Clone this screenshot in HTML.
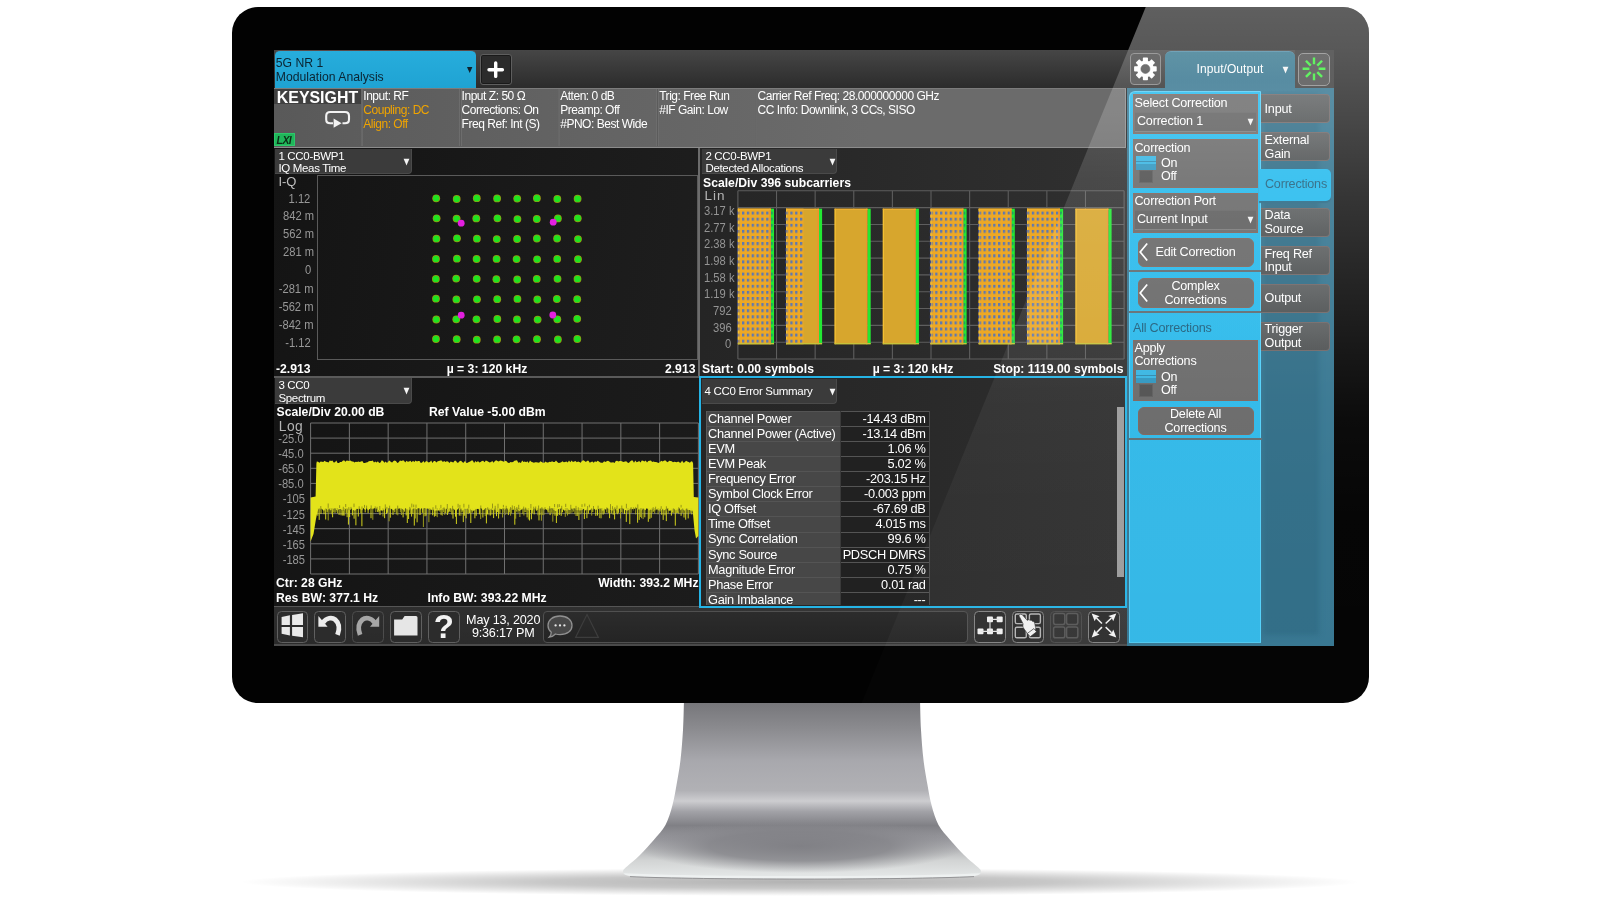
<!DOCTYPE html>
<html lang="en"><head><meta charset="utf-8"><title>5G NR Modulation Analysis</title>
<style>
html,body{margin:0;padding:0;background:#fff;}
body{width:1600px;height:900px;overflow:hidden;position:relative;font-family:"Liberation Sans",sans-serif;}
#scr{position:absolute;left:0;top:0;width:1600px;height:900px;clip-path:inset(50px 266px 254px 274px);background:#1b1b1b;filter:blur(0.4px);}
#scr div, #scr svg{position:absolute;box-sizing:border-box;}
.t{white-space:nowrap;letter-spacing:-0.35px;}
.btn{border:1px solid #5e5e5e;border-radius:3px;background:#2b2b2b;box-shadow:inset 0 0 0 1px #1a1a1a;}
.dd{background:#3b3b3b;border-radius:0 0 4px 0;border-bottom:1px solid #4a4a4a;border-right:1px solid #4a4a4a;}
.mbox{background:#676767;border:1px solid #7d6259;}
.mbtn{background:#666;border:1px solid #7d6259;border-radius:6px;}
.rtab{background:linear-gradient(180deg,#5c5f60,#4d5051);border:1px solid #6f6666;border-left:none;border-radius:0 4px 4px 0;}
</style></head><body>

<svg width="1600" height="900" viewBox="0 0 1600 900" style="position:absolute;left:0;top:0">
<defs>
<linearGradient id="sg" x1="0" y1="703" x2="0" y2="878" gradientUnits="userSpaceOnUse">
<stop offset="0" stop-color="#77777b"/><stop offset="0.14" stop-color="#8a8a8e"/>
<stop offset="0.33" stop-color="#a8a8ad"/><stop offset="0.50" stop-color="#b1b1b5"/>
<stop offset="0.56" stop-color="#cdcdd0"/><stop offset="0.62" stop-color="#a2a2a7"/>
<stop offset="0.70" stop-color="#808085"/><stop offset="0.78" stop-color="#9a9a9f"/>
<stop offset="0.90" stop-color="#d2d4d4"/><stop offset="1" stop-color="#e6e9e9"/>
</linearGradient>
<radialGradient id="blob" cx="800" cy="846" r="1" gradientUnits="userSpaceOnUse" gradientTransform="translate(800 846) scale(165 27) translate(-800 -846)">
<stop offset="0" stop-color="#7e7e83" stop-opacity="0.95"/><stop offset="0.55" stop-color="#828287" stop-opacity="0.8"/><stop offset="1" stop-color="#8a8a8f" stop-opacity="0"/></radialGradient>
<radialGradient id="shd" cx="800" cy="882" r="1" gradientUnits="userSpaceOnUse" gradientTransform="translate(800 882) scale(560 14) translate(-800 -882)">
<stop offset="0" stop-color="#000" stop-opacity="0.30"/><stop offset="0.45" stop-color="#000" stop-opacity="0.22"/><stop offset="0.8" stop-color="#000" stop-opacity="0.08"/><stop offset="1" stop-color="#000" stop-opacity="0"/></radialGradient>
<clipPath id="stc"><path d="M684.0 700.0 C683.8 705.0 683.6 720.0 683.0 730.0 C682.4 740.0 681.6 750.8 680.5 760.0 C679.4 769.2 677.8 777.5 676.5 785.0 C675.2 792.5 674.3 798.3 672.5 805.0 C670.7 811.7 668.6 819.2 665.5 825.0 C662.4 830.8 658.0 835.0 653.8 840.0 C649.5 845.0 644.4 850.7 640.0 855.0 C635.6 859.3 630.3 863.4 627.5 866.0 C624.7 868.6 623.7 869.1 623.2 870.5 C622.7 871.9 623.2 873.2 624.5 874.2 C625.8 875.2 629.9 875.9 631.0 876.2 C700 879.5 904 879.5 973.0 876.2 C974.1 875.9 978.2 875.2 979.5 874.2 C980.8 873.2 981.3 871.9 980.8 870.5 C980.3 869.1 979.3 868.6 976.5 866.0 C973.7 863.4 968.4 859.3 964.0 855.0 C959.6 850.7 954.5 845.0 950.2 840.0 C946.0 835.0 941.6 830.8 938.5 825.0 C935.4 819.2 933.3 811.7 931.5 805.0 C929.7 798.3 928.8 792.5 927.5 785.0 C926.2 777.5 924.6 769.2 923.5 760.0 C922.4 750.8 921.6 740.0 921.0 730.0 C920.4 720.0 920.2 705.0 920.0 700.0 Z"/></clipPath>
</defs>
<ellipse cx="800" cy="882" rx="560" ry="14" fill="url(#shd)"/>
<g clip-path="url(#stc)">
<rect x="600" y="700" width="400" height="180" fill="url(#sg)"/>
<rect x="600" y="810" width="400" height="70" fill="url(#blob)"/>
<path d="M622 873.2 C700 877 904 877 982 873.2 L982 880 L622 880 Z" fill="#eef1f1"/>
</g>
<path d="M630 876.6 C700 879.9 904 879.9 974 876.6" stroke="#8d8d90" stroke-width="0.9" fill="none"/>
</svg>

<div style="position:absolute;left:232px;top:7px;width:1137px;height:696px;border-radius:26px;background:#020202;"></div>
<div id="scr">
<div style="left:274.0px;top:50.0px;width:1060.0px;height:38.0px;background:linear-gradient(180deg,#464646 0%,#3a3a3a 45%,#2c2c2c 100%);"></div>
<div style="left:274.5px;top:50.4px;width:201.5px;height:37.6px;background:linear-gradient(180deg,#27addc,#1fa3d3);border-radius:5px 5px 0 0;border-top:1px solid #5a4a48;"></div>
<div class="t" style="top:56.3px;font-size:12.2px;line-height:14.2px;color:#0b2533;letter-spacing:0.01px;left:275.8px;">5G NR 1</div>
<div class="t" style="top:69.5px;font-size:12.2px;line-height:14.2px;color:#0b2533;letter-spacing:0.01px;left:275.8px;">Modulation Analysis</div>
<svg style="left:466px;top:66px" width="8" height="8" viewBox="0 0 8 8"><path d="M1 1 L6.4 1 L3.7 7 Z" fill="#10222c"/></svg>
<div class="btn" style="left:480.0px;top:54.0px;width:31.5px;height:31.0px;"><svg style="left:0;top:0" width="30" height="29" viewBox="0 0 30 29"><path d="M14.7 8 V21.4 M8 14.7 H21.4" stroke="#fff" stroke-width="3.4" stroke-linecap="round" fill="none"/></svg></div>
<div style="left:274.0px;top:88.0px;width:852.0px;height:59.6px;background:linear-gradient(90deg,#595959,#5e5e5e 15%,#6b6b6b 70%);border-top:1.2px solid #7c7c7c;border-bottom:1.6px solid #8c8c8c;border-right:1.2px solid #8c8c8c;"></div>
<div style="left:360.5px;top:89.2px;width:2.5px;height:56.6px;background:linear-gradient(90deg,#787878,#595959 45%,#767676);"></div>
<div style="left:459.0px;top:89.2px;width:2.5px;height:56.6px;background:linear-gradient(90deg,#787878,#595959 45%,#767676);"></div>
<div style="left:557.5px;top:89.2px;width:2.5px;height:56.6px;background:linear-gradient(90deg,#787878,#595959 45%,#767676);"></div>
<div style="left:656.0px;top:89.2px;width:2.5px;height:56.6px;background:linear-gradient(90deg,#787878,#595959 45%,#767676);"></div>
<div style="left:754.5px;top:89.2px;width:2.5px;height:56.6px;background:linear-gradient(90deg,#787878,#595959 45%,#767676);"></div>
<div style="left:274.0px;top:89.2px;width:87.0px;height:14.8px;background:#404040;"></div>
<div class="t" style="top:88.6px;font-size:15.9px;line-height:17.9px;color:#fff;font-weight:bold;letter-spacing:0.01px;left:276.8px;">KEYSIGHT</div>
<svg style="left:322px;top:108px" width="32" height="22" viewBox="0 0 32 22">
<path d="M11 15.2 H8.2 C5.6 15.2 4.2 13.8 4.2 11.4 V8 C4.2 5.4 5.6 4 8.2 4 H23 C25.6 4 27 5.4 27 8 V11.4 C27 13.8 25.6 15.2 23 15.2 H20.5" stroke="#f2f2f2" stroke-width="2.1" fill="none"/>
<path d="M11.6 10.6 L19.6 15.2 L11.6 19.8 Z" fill="#f2f2f2"/></svg>
<div style="left:274.4px;top:133.2px;width:20.6px;height:12.8px;background:#20b65a;border:1px solid #2cc86a;"></div>
<div class="t" style="top:133.6px;font-size:10.5px;line-height:12.5px;color:#0b2d16;font-weight:bold;left:276.6px;font-style:italic;letter-spacing:-0.6px;">LXI</div>
<div class="t" style="top:89.0px;font-size:12px;line-height:14px;color:#fff;letter-spacing:-0.47px;left:363.3px;">Input: RF</div>
<div class="t" style="top:103.0px;font-size:12px;line-height:14px;color:#f0a400;letter-spacing:-0.47px;left:363.3px;">Coupling: DC</div>
<div class="t" style="top:116.5px;font-size:12px;line-height:14px;color:#f0a400;letter-spacing:-0.47px;left:363.3px;">Align: Off</div>
<div class="t" style="top:89.0px;font-size:12px;line-height:14px;color:#fff;letter-spacing:-0.47px;left:461.6px;">Input Z: 50 Ω</div>
<div class="t" style="top:103.0px;font-size:12px;line-height:14px;color:#fff;letter-spacing:-0.47px;left:461.6px;">Corrections: On</div>
<div class="t" style="top:116.5px;font-size:12px;line-height:14px;color:#fff;letter-spacing:-0.47px;left:461.6px;">Freq Ref: Int (S)</div>
<div class="t" style="top:89.0px;font-size:12px;line-height:14px;color:#fff;letter-spacing:-0.47px;left:560.2px;">Atten: 0 dB</div>
<div class="t" style="top:103.0px;font-size:12px;line-height:14px;color:#fff;letter-spacing:-0.47px;left:560.2px;">Preamp: Off</div>
<div class="t" style="top:116.5px;font-size:12px;line-height:14px;color:#fff;letter-spacing:-0.47px;left:560.2px;">#PNO: Best Wide</div>
<div class="t" style="top:89.0px;font-size:12px;line-height:14px;color:#fff;letter-spacing:-0.47px;left:659.2px;">Trig: Free Run</div>
<div class="t" style="top:103.0px;font-size:12px;line-height:14px;color:#fff;letter-spacing:-0.47px;left:659.2px;">#IF Gain: Low</div>
<div class="t" style="top:89.0px;font-size:12px;line-height:14px;color:#fff;letter-spacing:-0.47px;left:757.6px;">Carrier Ref Freq: 28.000000000 GHz</div>
<div class="t" style="top:103.0px;font-size:12px;line-height:14px;color:#fff;letter-spacing:-0.47px;left:757.6px;">CC Info: Downlink, 3 CCs, SISO</div>
<div style="left:274.0px;top:147.6px;width:425.0px;height:229.4px;background:linear-gradient(100deg,#141414,#1e1e1e);"></div>
<div style="left:700.0px;top:147.6px;width:427.0px;height:229.4px;background:linear-gradient(90deg,#252525,#303030);"></div>
<div style="left:274.0px;top:378.0px;width:425.0px;height:229.0px;background:linear-gradient(100deg,#141414,#1c1c1c);"></div>
<div style="left:697.8px;top:147.6px;width:2.4px;height:229.0px;background:#6c6c6c;"></div>
<div style="left:274.0px;top:376.0px;width:425.0px;height:2.3px;background:#5a5a5a;"></div>
<div class="dd" style="left:275.0px;top:148.5px;width:136.5px;height:25.5px;"></div>
<div class="t" style="top:149.7px;font-size:11.5px;line-height:13.5px;color:#fff;letter-spacing:-0.32px;left:278.4px;">1 CC0-BWP1</div>
<div class="t" style="top:162.1px;font-size:11.5px;line-height:13.5px;color:#fff;letter-spacing:-0.32px;left:278.4px;">IQ Meas Time</div>
<svg style="left:403.0px;top:157.5px" width="8" height="8" viewBox="0 0 8 8"><path d="M0.6 0.8 L6.4 0.8 L3.5 7.4 Z" fill="#f4f4f4"/></svg>
<div class="t" style="top:173.9px;font-size:13px;line-height:15px;color:#c0c0c0;letter-spacing:-0.1px;left:278.4px;">I-Q</div>
<div style="left:316.8px;top:175.4px;width:381.3px;height:184.8px;border:1.2px solid #5a5a5a;"></div>
<div class="t" style="top:190.6px;font-size:13px;line-height:15px;color:#989898;letter-spacing:0.01px;right:1289.8px;text-align:right;transform:scaleX(0.86);transform-origin:right center;">1.12</div>
<div class="t" style="top:208.0px;font-size:13px;line-height:15px;color:#989898;letter-spacing:0.01px;right:1286.0px;text-align:right;transform:scaleX(0.86);transform-origin:right center;">842 m</div>
<div class="t" style="top:226.1px;font-size:13px;line-height:15px;color:#989898;letter-spacing:0.01px;right:1286.0px;text-align:right;transform:scaleX(0.86);transform-origin:right center;">562 m</div>
<div class="t" style="top:243.8px;font-size:13px;line-height:15px;color:#989898;letter-spacing:0.01px;right:1286.0px;text-align:right;transform:scaleX(0.86);transform-origin:right center;">281 m</div>
<div class="t" style="top:262.4px;font-size:13px;line-height:15px;color:#989898;letter-spacing:0.01px;right:1289.0px;text-align:right;transform:scaleX(0.86);transform-origin:right center;">0</div>
<div class="t" style="top:281.0px;font-size:13px;line-height:15px;color:#989898;letter-spacing:0.01px;right:1286.0px;text-align:right;transform:scaleX(0.86);transform-origin:right center;">-281 m</div>
<div class="t" style="top:298.9px;font-size:13px;line-height:15px;color:#989898;letter-spacing:0.01px;right:1286.0px;text-align:right;transform:scaleX(0.86);transform-origin:right center;">-562 m</div>
<div class="t" style="top:316.5px;font-size:13px;line-height:15px;color:#989898;letter-spacing:0.01px;right:1286.0px;text-align:right;transform:scaleX(0.86);transform-origin:right center;">-842 m</div>
<div class="t" style="top:335.0px;font-size:13px;line-height:15px;color:#989898;letter-spacing:0.01px;right:1289.8px;text-align:right;transform:scaleX(0.86);transform-origin:right center;">-1.12</div>
<svg style="left:0;top:0" width="1600" height="900" viewBox="0 0 1600 900"><circle cx="436.2" cy="198.3" r="3.9" fill="#9c9412"/><circle cx="436.2" cy="198.3" r="3.2" fill="#20e420"/><circle cx="436.6" cy="218.3" r="3.9" fill="#9c9412"/><circle cx="436.6" cy="218.3" r="3.2" fill="#20e420"/><circle cx="436.4" cy="238.7" r="3.9" fill="#9c9412"/><circle cx="436.4" cy="238.7" r="3.2" fill="#20e420"/><circle cx="436.0" cy="258.9" r="3.9" fill="#9c9412"/><circle cx="436.0" cy="258.9" r="3.2" fill="#20e420"/><circle cx="435.9" cy="278.9" r="3.9" fill="#9c9412"/><circle cx="435.9" cy="278.9" r="3.2" fill="#20e420"/><circle cx="436.0" cy="298.7" r="3.9" fill="#9c9412"/><circle cx="436.0" cy="298.7" r="3.2" fill="#20e420"/><circle cx="436.3" cy="319.5" r="3.9" fill="#9c9412"/><circle cx="436.3" cy="319.5" r="3.2" fill="#20e420"/><circle cx="436.0" cy="339.0" r="3.9" fill="#9c9412"/><circle cx="436.0" cy="339.0" r="3.2" fill="#20e420"/><circle cx="456.7" cy="199.0" r="3.9" fill="#9c9412"/><circle cx="456.7" cy="199.0" r="3.2" fill="#20e420"/><circle cx="456.6" cy="218.6" r="3.9" fill="#9c9412"/><circle cx="456.6" cy="218.6" r="3.2" fill="#20e420"/><circle cx="457.0" cy="238.3" r="3.9" fill="#9c9412"/><circle cx="457.0" cy="238.3" r="3.2" fill="#20e420"/><circle cx="456.9" cy="258.7" r="3.9" fill="#9c9412"/><circle cx="456.9" cy="258.7" r="3.2" fill="#20e420"/><circle cx="456.2" cy="278.6" r="3.9" fill="#9c9412"/><circle cx="456.2" cy="278.6" r="3.2" fill="#20e420"/><circle cx="456.4" cy="299.4" r="3.9" fill="#9c9412"/><circle cx="456.4" cy="299.4" r="3.2" fill="#20e420"/><circle cx="456.3" cy="319.3" r="3.9" fill="#9c9412"/><circle cx="456.3" cy="319.3" r="3.2" fill="#20e420"/><circle cx="456.7" cy="339.2" r="3.9" fill="#9c9412"/><circle cx="456.7" cy="339.2" r="3.2" fill="#20e420"/><circle cx="476.8" cy="198.2" r="3.9" fill="#9c9412"/><circle cx="476.8" cy="198.2" r="3.2" fill="#20e420"/><circle cx="476.3" cy="218.4" r="3.9" fill="#9c9412"/><circle cx="476.3" cy="218.4" r="3.2" fill="#20e420"/><circle cx="476.9" cy="238.7" r="3.9" fill="#9c9412"/><circle cx="476.9" cy="238.7" r="3.2" fill="#20e420"/><circle cx="476.6" cy="259.0" r="3.9" fill="#9c9412"/><circle cx="476.6" cy="259.0" r="3.2" fill="#20e420"/><circle cx="476.7" cy="278.8" r="3.9" fill="#9c9412"/><circle cx="476.7" cy="278.8" r="3.2" fill="#20e420"/><circle cx="477.0" cy="299.3" r="3.9" fill="#9c9412"/><circle cx="477.0" cy="299.3" r="3.2" fill="#20e420"/><circle cx="476.5" cy="319.3" r="3.9" fill="#9c9412"/><circle cx="476.5" cy="319.3" r="3.2" fill="#20e420"/><circle cx="476.8" cy="339.7" r="3.9" fill="#9c9412"/><circle cx="476.8" cy="339.7" r="3.2" fill="#20e420"/><circle cx="497.1" cy="198.4" r="3.9" fill="#9c9412"/><circle cx="497.1" cy="198.4" r="3.2" fill="#20e420"/><circle cx="497.4" cy="218.3" r="3.9" fill="#9c9412"/><circle cx="497.4" cy="218.3" r="3.2" fill="#20e420"/><circle cx="496.8" cy="239.1" r="3.9" fill="#9c9412"/><circle cx="496.8" cy="239.1" r="3.2" fill="#20e420"/><circle cx="496.6" cy="258.9" r="3.9" fill="#9c9412"/><circle cx="496.6" cy="258.9" r="3.2" fill="#20e420"/><circle cx="496.4" cy="279.2" r="3.9" fill="#9c9412"/><circle cx="496.4" cy="279.2" r="3.2" fill="#20e420"/><circle cx="497.2" cy="299.2" r="3.9" fill="#9c9412"/><circle cx="497.2" cy="299.2" r="3.2" fill="#20e420"/><circle cx="497.3" cy="319.0" r="3.9" fill="#9c9412"/><circle cx="497.3" cy="319.0" r="3.2" fill="#20e420"/><circle cx="497.1" cy="339.4" r="3.9" fill="#9c9412"/><circle cx="497.1" cy="339.4" r="3.2" fill="#20e420"/><circle cx="517.2" cy="198.6" r="3.9" fill="#9c9412"/><circle cx="517.2" cy="198.6" r="3.2" fill="#20e420"/><circle cx="517.4" cy="219.1" r="3.9" fill="#9c9412"/><circle cx="517.4" cy="219.1" r="3.2" fill="#20e420"/><circle cx="517.1" cy="239.0" r="3.9" fill="#9c9412"/><circle cx="517.1" cy="239.0" r="3.2" fill="#20e420"/><circle cx="516.6" cy="259.1" r="3.9" fill="#9c9412"/><circle cx="516.6" cy="259.1" r="3.2" fill="#20e420"/><circle cx="517.2" cy="279.5" r="3.9" fill="#9c9412"/><circle cx="517.2" cy="279.5" r="3.2" fill="#20e420"/><circle cx="517.4" cy="298.9" r="3.9" fill="#9c9412"/><circle cx="517.4" cy="298.9" r="3.2" fill="#20e420"/><circle cx="517.0" cy="319.4" r="3.9" fill="#9c9412"/><circle cx="517.0" cy="319.4" r="3.2" fill="#20e420"/><circle cx="516.6" cy="339.3" r="3.9" fill="#9c9412"/><circle cx="516.6" cy="339.3" r="3.2" fill="#20e420"/><circle cx="536.9" cy="198.2" r="3.9" fill="#9c9412"/><circle cx="536.9" cy="198.2" r="3.2" fill="#20e420"/><circle cx="536.8" cy="219.0" r="3.9" fill="#9c9412"/><circle cx="536.8" cy="219.0" r="3.2" fill="#20e420"/><circle cx="536.9" cy="238.5" r="3.9" fill="#9c9412"/><circle cx="536.9" cy="238.5" r="3.2" fill="#20e420"/><circle cx="537.1" cy="259.3" r="3.9" fill="#9c9412"/><circle cx="537.1" cy="259.3" r="3.2" fill="#20e420"/><circle cx="536.8" cy="278.9" r="3.9" fill="#9c9412"/><circle cx="536.8" cy="278.9" r="3.2" fill="#20e420"/><circle cx="537.3" cy="299.5" r="3.9" fill="#9c9412"/><circle cx="537.3" cy="299.5" r="3.2" fill="#20e420"/><circle cx="537.6" cy="319.6" r="3.9" fill="#9c9412"/><circle cx="537.6" cy="319.6" r="3.2" fill="#20e420"/><circle cx="537.0" cy="339.2" r="3.9" fill="#9c9412"/><circle cx="537.0" cy="339.2" r="3.2" fill="#20e420"/><circle cx="557.3" cy="199.0" r="3.9" fill="#9c9412"/><circle cx="557.3" cy="199.0" r="3.2" fill="#20e420"/><circle cx="557.9" cy="218.4" r="3.9" fill="#9c9412"/><circle cx="557.9" cy="218.4" r="3.2" fill="#20e420"/><circle cx="557.1" cy="238.5" r="3.9" fill="#9c9412"/><circle cx="557.1" cy="238.5" r="3.2" fill="#20e420"/><circle cx="557.2" cy="258.9" r="3.9" fill="#9c9412"/><circle cx="557.2" cy="258.9" r="3.2" fill="#20e420"/><circle cx="557.5" cy="278.8" r="3.9" fill="#9c9412"/><circle cx="557.5" cy="278.8" r="3.2" fill="#20e420"/><circle cx="556.9" cy="299.0" r="3.9" fill="#9c9412"/><circle cx="556.9" cy="299.0" r="3.2" fill="#20e420"/><circle cx="557.3" cy="319.3" r="3.9" fill="#9c9412"/><circle cx="557.3" cy="319.3" r="3.2" fill="#20e420"/><circle cx="557.9" cy="339.5" r="3.9" fill="#9c9412"/><circle cx="557.9" cy="339.5" r="3.2" fill="#20e420"/><circle cx="577.6" cy="198.7" r="3.9" fill="#9c9412"/><circle cx="577.6" cy="198.7" r="3.2" fill="#20e420"/><circle cx="577.8" cy="218.3" r="3.9" fill="#9c9412"/><circle cx="577.8" cy="218.3" r="3.2" fill="#20e420"/><circle cx="578.0" cy="239.1" r="3.9" fill="#9c9412"/><circle cx="578.0" cy="239.1" r="3.2" fill="#20e420"/><circle cx="578.0" cy="259.2" r="3.9" fill="#9c9412"/><circle cx="578.0" cy="259.2" r="3.2" fill="#20e420"/><circle cx="577.5" cy="278.9" r="3.9" fill="#9c9412"/><circle cx="577.5" cy="278.9" r="3.2" fill="#20e420"/><circle cx="577.2" cy="299.2" r="3.9" fill="#9c9412"/><circle cx="577.2" cy="299.2" r="3.2" fill="#20e420"/><circle cx="577.2" cy="318.8" r="3.9" fill="#9c9412"/><circle cx="577.2" cy="318.8" r="3.2" fill="#20e420"/><circle cx="577.3" cy="339.0" r="3.9" fill="#9c9412"/><circle cx="577.3" cy="339.0" r="3.2" fill="#20e420"/><circle cx="461.2" cy="223.2" r="3.4" fill="#e31fe0"/><circle cx="553.2" cy="222.2" r="3.4" fill="#e31fe0"/><circle cx="461.2" cy="315.2" r="3.4" fill="#e31fe0"/><circle cx="552.8" cy="315" r="3.4" fill="#e31fe0"/></svg>
<div class="t" style="top:361.9px;font-size:12.2px;line-height:14.2px;color:#fff;font-weight:bold;letter-spacing:0.01px;left:276.0px;">-2.913</div>
<div class="t" style="top:361.9px;font-size:12.2px;line-height:14.2px;color:#fff;font-weight:bold;letter-spacing:0.01px;left:287.0px;width:400px;text-align:center;">µ = 3: 120 kHz</div>
<div class="t" style="top:361.9px;font-size:12.2px;line-height:14.2px;color:#fff;font-weight:bold;letter-spacing:0.01px;right:904.5px;text-align:right;">2.913</div>
<div class="dd" style="left:702.0px;top:148.5px;width:134.5px;height:25.5px;"></div>
<div class="t" style="top:149.7px;font-size:11.5px;line-height:13.5px;color:#fff;letter-spacing:-0.32px;left:705.4px;">2 CC0-BWP1</div>
<div class="t" style="top:162.1px;font-size:11.5px;line-height:13.5px;color:#fff;letter-spacing:-0.32px;left:705.4px;">Detected Allocations</div>
<svg style="left:828.5px;top:157.5px" width="8" height="8" viewBox="0 0 8 8"><path d="M0.6 0.8 L6.4 0.8 L3.5 7.4 Z" fill="#f4f4f4"/></svg>
<div class="t" style="top:175.9px;font-size:12.2px;line-height:14.2px;color:#fff;font-weight:bold;letter-spacing:0.01px;left:703.0px;">Scale/Div 396 subcarriers</div>
<div class="t" style="top:188.4px;font-size:13.5px;line-height:15.5px;color:#b4b4b4;letter-spacing:1.1px;left:704.4px;">Lin</div>
<div class="t" style="top:202.8px;font-size:13px;line-height:15px;color:#949494;letter-spacing:0.01px;right:865.8px;text-align:right;transform:scaleX(0.86);transform-origin:right center;">3.17 k</div>
<div class="t" style="top:219.5px;font-size:13px;line-height:15px;color:#949494;letter-spacing:0.01px;right:865.8px;text-align:right;transform:scaleX(0.86);transform-origin:right center;">2.77 k</div>
<div class="t" style="top:236.2px;font-size:13px;line-height:15px;color:#949494;letter-spacing:0.01px;right:865.8px;text-align:right;transform:scaleX(0.86);transform-origin:right center;">2.38 k</div>
<div class="t" style="top:252.9px;font-size:13px;line-height:15px;color:#949494;letter-spacing:0.01px;right:865.8px;text-align:right;transform:scaleX(0.86);transform-origin:right center;">1.98 k</div>
<div class="t" style="top:269.6px;font-size:13px;line-height:15px;color:#949494;letter-spacing:0.01px;right:865.8px;text-align:right;transform:scaleX(0.86);transform-origin:right center;">1.58 k</div>
<div class="t" style="top:286.3px;font-size:13px;line-height:15px;color:#949494;letter-spacing:0.01px;right:865.8px;text-align:right;transform:scaleX(0.86);transform-origin:right center;">1.19 k</div>
<div class="t" style="top:303.0px;font-size:13px;line-height:15px;color:#949494;letter-spacing:0.01px;right:868.6px;text-align:right;transform:scaleX(0.86);transform-origin:right center;">792</div>
<div class="t" style="top:319.7px;font-size:13px;line-height:15px;color:#949494;letter-spacing:0.01px;right:868.6px;text-align:right;transform:scaleX(0.86);transform-origin:right center;">396</div>
<div class="t" style="top:336.4px;font-size:13px;line-height:15px;color:#949494;letter-spacing:0.01px;right:868.6px;text-align:right;transform:scaleX(0.86);transform-origin:right center;">0</div>
<svg style="left:0;top:0" width="1600" height="900" viewBox="0 0 1600 900"><defs><pattern id="dp2" x="737.2" y="211.6" width="4.83" height="6.1" patternUnits="userSpaceOnUse"><rect x="0" y="0" width="4.83" height="3" fill="#2a3fa0" opacity="0.85"/></pattern></defs><defs><pattern id="dp" x="737.2" y="211.6" width="4.83" height="6.1" patternUnits="userSpaceOnUse"><rect x="0" y="0" width="2.3" height="3" fill="#5274bd" opacity="0.92"/></pattern></defs><line x1="737.90" y1="190.8" x2="737.90" y2="359.0" stroke="#5e5e5e" stroke-width="1.1"/><line x1="776.52" y1="190.8" x2="776.52" y2="359.0" stroke="#5e5e5e" stroke-width="1.1"/><line x1="815.14" y1="190.8" x2="815.14" y2="359.0" stroke="#5e5e5e" stroke-width="1.1"/><line x1="853.76" y1="190.8" x2="853.76" y2="359.0" stroke="#5e5e5e" stroke-width="1.1"/><line x1="892.38" y1="190.8" x2="892.38" y2="359.0" stroke="#5e5e5e" stroke-width="1.1"/><line x1="931.00" y1="190.8" x2="931.00" y2="359.0" stroke="#5e5e5e" stroke-width="1.1"/><line x1="969.62" y1="190.8" x2="969.62" y2="359.0" stroke="#5e5e5e" stroke-width="1.1"/><line x1="1008.24" y1="190.8" x2="1008.24" y2="359.0" stroke="#5e5e5e" stroke-width="1.1"/><line x1="1046.86" y1="190.8" x2="1046.86" y2="359.0" stroke="#5e5e5e" stroke-width="1.1"/><line x1="1085.48" y1="190.8" x2="1085.48" y2="359.0" stroke="#5e5e5e" stroke-width="1.1"/><line x1="1124.10" y1="190.8" x2="1124.10" y2="359.0" stroke="#5e5e5e" stroke-width="1.1"/><line x1="737.9" y1="190.80" x2="1124.1" y2="190.80" stroke="#5e5e5e" stroke-width="1.1"/><line x1="737.9" y1="207.62" x2="1124.1" y2="207.62" stroke="#5e5e5e" stroke-width="1.1"/><line x1="737.9" y1="224.44" x2="1124.1" y2="224.44" stroke="#5e5e5e" stroke-width="1.1"/><line x1="737.9" y1="241.26" x2="1124.1" y2="241.26" stroke="#5e5e5e" stroke-width="1.1"/><line x1="737.9" y1="258.08" x2="1124.1" y2="258.08" stroke="#5e5e5e" stroke-width="1.1"/><line x1="737.9" y1="274.90" x2="1124.1" y2="274.90" stroke="#5e5e5e" stroke-width="1.1"/><line x1="737.9" y1="291.72" x2="1124.1" y2="291.72" stroke="#5e5e5e" stroke-width="1.1"/><line x1="737.9" y1="308.54" x2="1124.1" y2="308.54" stroke="#5e5e5e" stroke-width="1.1"/><line x1="737.9" y1="325.36" x2="1124.1" y2="325.36" stroke="#5e5e5e" stroke-width="1.1"/><line x1="737.9" y1="342.18" x2="1124.1" y2="342.18" stroke="#5e5e5e" stroke-width="1.1"/><line x1="737.9" y1="359.00" x2="1124.1" y2="359.00" stroke="#5e5e5e" stroke-width="1.1"/><rect x="737.9" y="208.7" width="33.0" height="135.5" fill="#d7a62d"/><rect x="737.9" y="208.7" width="33.0" height="135.5" fill="#eea824"/><rect x="737.9" y="210.2" width="32.5" height="134.0" fill="url(#dp)"/><rect x="737.9" y="208.7" width="1.1" height="135.5" fill="#f7c232"/><rect x="769.3" y="208.7" width="1.6" height="135.5" fill="#ee922c"/><rect x="770.9" y="208.7" width="3.1" height="135.5" fill="#22e833"/><rect x="737.9" y="208.7" width="33.0" height="1.2" fill="#f0b030"/><rect x="737.1999999999999" y="210.2" width="1.3" height="134.0" fill="url(#dp2)"/><rect x="771.1" y="210.2" width="1.6" height="134.0" fill="url(#dp2)" opacity="0.55"/><rect x="737.9" y="343.0" width="36.1" height="1.3" fill="#c6c23a"/><rect x="786.0" y="208.7" width="33.0" height="135.5" fill="#d7a62d"/><rect x="786.0" y="208.7" width="17.5" height="135.5" fill="#eea824"/><rect x="786.0" y="210.2" width="17.0" height="134.0" fill="url(#dp)"/><rect x="786.0" y="208.7" width="1.1" height="135.5" fill="#f7c232"/><rect x="817.4" y="208.7" width="1.6" height="135.5" fill="#ee922c"/><rect x="819.0" y="208.7" width="3.1" height="135.5" fill="#22e833"/><rect x="786.0" y="208.7" width="33.0" height="1.2" fill="#f0b030"/><rect x="785.3" y="210.2" width="1.3" height="134.0" fill="url(#dp2)"/><rect x="786.0" y="343.0" width="36.1" height="1.3" fill="#c6c23a"/><rect x="834.6" y="208.7" width="33.0" height="135.5" fill="#d7a62d"/><rect x="834.6" y="208.7" width="1.1" height="135.5" fill="#f7c232"/><rect x="866.0" y="208.7" width="1.6" height="135.5" fill="#ee922c"/><rect x="867.6" y="208.7" width="3.1" height="135.5" fill="#22e833"/><rect x="834.6" y="208.7" width="33.0" height="1.2" fill="#f0b030"/><rect x="834.6" y="343.0" width="36.1" height="1.3" fill="#c6c23a"/><rect x="882.8" y="208.7" width="33.0" height="135.5" fill="#d7a62d"/><rect x="882.8" y="208.7" width="1.1" height="135.5" fill="#f7c232"/><rect x="914.1999999999999" y="208.7" width="1.6" height="135.5" fill="#ee922c"/><rect x="915.8" y="208.7" width="3.1" height="135.5" fill="#22e833"/><rect x="882.8" y="208.7" width="33.0" height="1.2" fill="#f0b030"/><rect x="882.8" y="343.0" width="36.1" height="1.3" fill="#c6c23a"/><rect x="930.5" y="208.7" width="33.0" height="135.5" fill="#d7a62d"/><rect x="930.5" y="208.7" width="33.0" height="135.5" fill="#eea824"/><rect x="930.5" y="210.2" width="32.5" height="134.0" fill="url(#dp)"/><rect x="930.5" y="208.7" width="1.1" height="135.5" fill="#f7c232"/><rect x="961.9" y="208.7" width="1.6" height="135.5" fill="#ee922c"/><rect x="963.5" y="208.7" width="3.1" height="135.5" fill="#22e833"/><rect x="930.5" y="208.7" width="33.0" height="1.2" fill="#f0b030"/><rect x="929.8" y="210.2" width="1.3" height="134.0" fill="url(#dp2)"/><rect x="963.7" y="210.2" width="1.6" height="134.0" fill="url(#dp2)" opacity="0.55"/><rect x="930.5" y="343.0" width="36.1" height="1.3" fill="#c6c23a"/><rect x="978.7" y="208.7" width="33.0" height="135.5" fill="#d7a62d"/><rect x="978.7" y="208.7" width="33.0" height="135.5" fill="#eea824"/><rect x="978.7" y="210.2" width="32.5" height="134.0" fill="url(#dp)"/><rect x="978.7" y="208.7" width="1.1" height="135.5" fill="#f7c232"/><rect x="1010.1" y="208.7" width="1.6" height="135.5" fill="#ee922c"/><rect x="1011.7" y="208.7" width="3.1" height="135.5" fill="#22e833"/><rect x="978.7" y="208.7" width="33.0" height="1.2" fill="#f0b030"/><rect x="978.0" y="210.2" width="1.3" height="134.0" fill="url(#dp2)"/><rect x="1011.9000000000001" y="210.2" width="1.6" height="134.0" fill="url(#dp2)" opacity="0.55"/><rect x="978.7" y="343.0" width="36.1" height="1.3" fill="#c6c23a"/><rect x="1027.0" y="208.7" width="33.0" height="135.5" fill="#d7a62d"/><rect x="1027.0" y="208.7" width="33.0" height="135.5" fill="#eea824"/><rect x="1027.0" y="210.2" width="32.5" height="134.0" fill="url(#dp)"/><rect x="1027.0" y="208.7" width="1.1" height="135.5" fill="#f7c232"/><rect x="1058.4" y="208.7" width="1.6" height="135.5" fill="#ee922c"/><rect x="1060.0" y="208.7" width="3.1" height="135.5" fill="#22e833"/><rect x="1027.0" y="208.7" width="33.0" height="1.2" fill="#f0b030"/><rect x="1026.3" y="210.2" width="1.3" height="134.0" fill="url(#dp2)"/><rect x="1060.2" y="210.2" width="1.6" height="134.0" fill="url(#dp2)" opacity="0.55"/><rect x="1027.0" y="343.0" width="36.1" height="1.3" fill="#c6c23a"/><rect x="1075.5" y="208.7" width="33.0" height="135.5" fill="#d7a62d"/><rect x="1075.5" y="208.7" width="1.1" height="135.5" fill="#f7c232"/><rect x="1106.9" y="208.7" width="1.6" height="135.5" fill="#ee922c"/><rect x="1108.5" y="208.7" width="3.1" height="135.5" fill="#22e833"/><rect x="1075.5" y="208.7" width="33.0" height="1.2" fill="#f0b030"/><rect x="1075.5" y="343.0" width="36.1" height="1.3" fill="#c6c23a"/></svg>
<div class="t" style="top:361.9px;font-size:12.2px;line-height:14.2px;color:#fff;font-weight:bold;letter-spacing:0.01px;left:702.0px;">Start: 0.00 symbols</div>
<div class="t" style="top:361.9px;font-size:12.2px;line-height:14.2px;color:#fff;font-weight:bold;letter-spacing:0.01px;left:713.0px;width:400px;text-align:center;">µ = 3: 120 kHz</div>
<div class="t" style="top:361.9px;font-size:12.2px;line-height:14.2px;color:#fff;font-weight:bold;letter-spacing:0.01px;right:476.5px;text-align:right;">Stop: 1119.00 symbols</div>
<div class="dd" style="left:275.0px;top:378.0px;width:136.5px;height:25.5px;"></div>
<div class="t" style="top:379.1px;font-size:11.5px;line-height:13.5px;color:#fff;letter-spacing:-0.32px;left:278.4px;">3 CC0</div>
<div class="t" style="top:391.6px;font-size:11.5px;line-height:13.5px;color:#fff;letter-spacing:-0.32px;left:278.4px;">Spectrum</div>
<svg style="left:403.0px;top:387px" width="8" height="8" viewBox="0 0 8 8"><path d="M0.6 0.8 L6.4 0.8 L3.5 7.4 Z" fill="#f4f4f4"/></svg>
<div class="t" style="top:405.4px;font-size:12.2px;line-height:14.2px;color:#fff;font-weight:bold;letter-spacing:0.01px;left:276.5px;">Scale/Div 20.00 dB</div>
<div class="t" style="top:405.4px;font-size:12.2px;line-height:14.2px;color:#fff;font-weight:bold;letter-spacing:0.01px;left:429.0px;">Ref Value -5.00 dBm</div>
<div class="t" style="top:418.5px;font-size:13.8px;line-height:15.8px;color:#b4b4b4;letter-spacing:0.45px;left:278.8px;">Log</div>
<div class="t" style="top:431.0px;font-size:13px;line-height:15px;color:#989898;letter-spacing:0.01px;right:1296.2px;text-align:right;transform:scaleX(0.86);transform-origin:right center;">-25.0</div>
<div class="t" style="top:446.1px;font-size:13px;line-height:15px;color:#989898;letter-spacing:0.01px;right:1296.2px;text-align:right;transform:scaleX(0.86);transform-origin:right center;">-45.0</div>
<div class="t" style="top:461.2px;font-size:13px;line-height:15px;color:#989898;letter-spacing:0.01px;right:1296.2px;text-align:right;transform:scaleX(0.86);transform-origin:right center;">-65.0</div>
<div class="t" style="top:476.3px;font-size:13px;line-height:15px;color:#989898;letter-spacing:0.01px;right:1296.2px;text-align:right;transform:scaleX(0.86);transform-origin:right center;">-85.0</div>
<div class="t" style="top:491.4px;font-size:13px;line-height:15px;color:#989898;letter-spacing:0.01px;right:1295.0px;text-align:right;transform:scaleX(0.86);transform-origin:right center;">-105</div>
<div class="t" style="top:506.5px;font-size:13px;line-height:15px;color:#989898;letter-spacing:0.01px;right:1295.0px;text-align:right;transform:scaleX(0.86);transform-origin:right center;">-125</div>
<div class="t" style="top:521.6px;font-size:13px;line-height:15px;color:#989898;letter-spacing:0.01px;right:1295.0px;text-align:right;transform:scaleX(0.86);transform-origin:right center;">-145</div>
<div class="t" style="top:536.7px;font-size:13px;line-height:15px;color:#989898;letter-spacing:0.01px;right:1295.0px;text-align:right;transform:scaleX(0.86);transform-origin:right center;">-165</div>
<div class="t" style="top:551.8px;font-size:13px;line-height:15px;color:#989898;letter-spacing:0.01px;right:1295.0px;text-align:right;transform:scaleX(0.86);transform-origin:right center;">-185</div>
<svg style="left:0;top:0" width="1600" height="900" viewBox="0 0 1600 900"><line x1="310.60" y1="423.0" x2="310.60" y2="574.0" stroke="#707070" stroke-width="1"/><line x1="349.38" y1="423.0" x2="349.38" y2="574.0" stroke="#707070" stroke-width="1"/><line x1="388.16" y1="423.0" x2="388.16" y2="574.0" stroke="#707070" stroke-width="1"/><line x1="426.94" y1="423.0" x2="426.94" y2="574.0" stroke="#707070" stroke-width="1"/><line x1="465.72" y1="423.0" x2="465.72" y2="574.0" stroke="#707070" stroke-width="1"/><line x1="504.50" y1="423.0" x2="504.50" y2="574.0" stroke="#707070" stroke-width="1"/><line x1="543.28" y1="423.0" x2="543.28" y2="574.0" stroke="#707070" stroke-width="1"/><line x1="582.06" y1="423.0" x2="582.06" y2="574.0" stroke="#707070" stroke-width="1"/><line x1="620.84" y1="423.0" x2="620.84" y2="574.0" stroke="#707070" stroke-width="1"/><line x1="659.62" y1="423.0" x2="659.62" y2="574.0" stroke="#707070" stroke-width="1"/><line x1="698.40" y1="423.0" x2="698.40" y2="574.0" stroke="#707070" stroke-width="1"/><line x1="310.6" y1="423.00" x2="698.4000000000001" y2="423.00" stroke="#707070" stroke-width="1"/><line x1="310.6" y1="438.10" x2="698.4000000000001" y2="438.10" stroke="#707070" stroke-width="1"/><line x1="310.6" y1="453.20" x2="698.4000000000001" y2="453.20" stroke="#707070" stroke-width="1"/><line x1="310.6" y1="468.30" x2="698.4000000000001" y2="468.30" stroke="#707070" stroke-width="1"/><line x1="310.6" y1="483.40" x2="698.4000000000001" y2="483.40" stroke="#707070" stroke-width="1"/><line x1="310.6" y1="498.50" x2="698.4000000000001" y2="498.50" stroke="#707070" stroke-width="1"/><line x1="310.6" y1="513.60" x2="698.4000000000001" y2="513.60" stroke="#707070" stroke-width="1"/><line x1="310.6" y1="528.70" x2="698.4000000000001" y2="528.70" stroke="#707070" stroke-width="1"/><line x1="310.6" y1="543.80" x2="698.4000000000001" y2="543.80" stroke="#707070" stroke-width="1"/><line x1="310.6" y1="558.90" x2="698.4000000000001" y2="558.90" stroke="#707070" stroke-width="1"/><line x1="310.6" y1="574.00" x2="698.4000000000001" y2="574.00" stroke="#707070" stroke-width="1"/><path d="M310.6 541.5 L310.6 497.5 L315.6 496.5 L316.4 463.5 L316.8 461.5 L318.1 461.8 L319.4 462.8 L320.7 461.6 L322.0 461.7 L323.3 461.9 L324.6 460.8 L325.9 461.7 L327.2 462.0 L328.5 462.4 L329.8 460.6 L331.1 461.1 L332.4 460.5 L333.7 462.5 L335.0 462.2 L336.3 460.4 L337.6 463.0 L338.9 462.9 L340.2 462.1 L341.5 462.0 L342.8 460.7 L344.1 460.3 L345.4 461.7 L346.7 460.5 L348.0 460.8 L349.3 461.0 L350.6 460.4 L351.9 461.6 L353.2 461.5 L354.5 462.6 L355.8 461.7 L357.1 462.0 L358.4 461.6 L359.7 462.1 L361.0 461.5 L362.3 461.1 L363.6 463.0 L364.9 463.0 L366.2 462.6 L367.5 462.2 L368.8 461.2 L370.1 460.9 L371.4 461.1 L372.7 460.5 L374.0 462.4 L375.3 461.4 L376.6 462.6 L377.9 461.3 L379.2 462.9 L380.5 462.6 L381.8 460.3 L383.1 460.9 L384.4 462.8 L385.7 461.6 L387.0 462.9 L388.3 461.4 L389.6 460.5 L390.9 462.0 L392.2 462.4 L393.5 461.0 L394.8 460.5 L396.1 461.2 L397.4 462.9 L398.7 462.3 L400.0 460.6 L401.3 461.0 L402.6 460.6 L403.9 460.5 L405.2 462.5 L406.5 460.8 L407.8 461.8 L409.1 461.5 L410.4 460.8 L411.7 462.3 L413.0 460.7 L414.3 462.0 L415.6 460.6 L416.9 461.4 L418.2 460.9 L419.5 461.0 L420.8 462.9 L422.1 462.5 L423.4 461.1 L424.7 462.7 L426.0 460.9 L427.3 461.4 L428.6 462.6 L429.9 462.0 L431.2 460.6 L432.5 463.0 L433.8 460.9 L435.1 461.0 L436.4 462.4 L437.7 461.2 L439.0 461.1 L440.3 460.5 L441.6 460.5 L442.9 461.9 L444.2 461.0 L445.5 461.9 L446.8 461.3 L448.1 461.5 L449.4 462.9 L450.7 461.6 L452.0 461.9 L453.3 462.6 L454.6 460.8 L455.9 460.7 L457.2 462.8 L458.5 462.5 L459.8 461.0 L461.1 460.8 L462.4 462.3 L463.7 462.8 L465.0 460.8 L466.3 462.9 L467.6 462.7 L468.9 461.9 L470.2 461.4 L471.5 460.6 L472.8 460.4 L474.1 462.9 L475.4 460.9 L476.7 462.2 L478.0 461.0 L479.3 462.5 L480.6 461.9 L481.9 461.1 L483.2 460.8 L484.5 462.2 L485.8 460.5 L487.1 460.9 L488.4 461.8 L489.7 462.6 L491.0 462.0 L492.3 461.1 L493.6 462.8 L494.9 460.9 L496.2 460.3 L497.5 461.0 L498.8 461.5 L500.1 460.5 L501.4 460.8 L502.7 461.3 L504.0 461.8 L505.3 460.7 L506.6 461.3 L507.9 462.7 L509.2 462.9 L510.5 462.1 L511.8 462.2 L513.1 461.9 L514.4 460.7 L515.7 460.4 L517.0 460.3 L518.3 462.8 L519.6 462.2 L520.9 462.9 L522.2 460.4 L523.5 462.0 L524.8 461.6 L526.1 462.3 L527.4 461.2 L528.7 463.0 L530.0 460.5 L531.3 461.8 L532.6 462.3 L533.9 462.7 L535.2 462.3 L536.5 462.2 L537.8 462.4 L539.1 462.8 L540.4 461.2 L541.7 462.1 L543.0 462.7 L544.3 462.7 L545.6 461.4 L546.9 462.4 L548.2 462.6 L549.5 461.8 L550.8 462.0 L552.1 461.3 L553.4 461.9 L554.7 461.9 L556.0 460.5 L557.3 462.0 L558.6 463.0 L559.9 462.7 L561.2 462.3 L562.5 461.3 L563.8 462.3 L565.1 461.9 L566.4 461.5 L567.7 462.6 L569.0 460.5 L570.3 462.3 L571.6 460.4 L572.9 461.9 L574.2 461.6 L575.5 460.9 L576.8 462.2 L578.1 461.6 L579.4 462.0 L580.7 462.8 L582.0 461.0 L583.3 460.3 L584.6 461.1 L585.9 462.1 L587.2 460.8 L588.5 460.8 L589.8 462.7 L591.1 462.1 L592.4 461.5 L593.7 462.7 L595.0 461.2 L596.3 462.1 L597.6 460.8 L598.9 461.5 L600.2 462.5 L601.5 462.8 L602.8 462.7 L604.1 461.3 L605.4 461.9 L606.7 461.2 L608.0 460.7 L609.3 461.6 L610.6 462.6 L611.9 462.6 L613.2 462.2 L614.5 462.9 L615.8 461.0 L617.1 460.8 L618.4 461.5 L619.7 461.0 L621.0 460.9 L622.3 461.4 L623.6 462.0 L624.9 461.6 L626.2 461.2 L627.5 462.6 L628.8 463.0 L630.1 461.5 L631.4 460.5 L632.7 460.4 L634.0 462.7 L635.3 460.4 L636.6 462.2 L637.9 461.8 L639.2 461.1 L640.5 462.4 L641.8 460.4 L643.1 460.7 L644.4 461.5 L645.7 460.4 L647.0 462.5 L648.3 460.9 L649.6 460.7 L650.9 460.4 L652.2 462.0 L653.5 461.5 L654.8 462.0 L656.1 462.1 L657.4 462.5 L658.7 462.9 L660.0 462.1 L661.3 460.8 L662.6 461.6 L663.9 460.8 L665.2 460.3 L666.5 461.6 L667.8 462.2 L669.1 460.8 L670.4 461.0 L671.7 461.2 L673.0 462.2 L674.3 461.7 L675.6 462.0 L676.9 462.3 L678.2 461.4 L679.5 462.4 L680.8 462.7 L682.1 460.5 L683.4 462.8 L684.7 462.3 L686.0 460.7 L687.3 461.5 L688.6 462.0 L689.9 462.8 L691.2 461.3 L692.5 461.8 L693.1 463.5 L693.8 497.0 L698.3 497.5 L698.3 536.0 L696.0 538.5 L694.5 530.0 L692.8 512.0 L692.3 510.5 L690.9 510.7 L689.8 509.9 L688.9 510.1 L687.5 509.8 L686.2 508.5 L684.8 510.8 L683.3 509.5 L681.9 508.9 L680.5 510.5 L679.5 508.1 L678.3 509.6 L677.0 509.4 L676.2 510.3 L675.3 510.3 L674.4 508.9 L673.1 508.3 L672.2 509.4 L670.9 510.4 L669.6 510.7 L668.4 510.7 L667.6 508.6 L666.4 508.8 L665.1 509.8 L663.9 510.4 L662.7 508.8 L661.7 510.4 L660.2 508.5 L658.8 510.8 L657.7 509.6 L656.7 509.5 L655.6 509.7 L654.8 510.8 L653.6 509.1 L652.2 509.6 L651.1 510.0 L650.2 509.5 L649.2 510.8 L647.7 508.7 L646.6 508.3 L645.5 510.3 L644.0 509.3 L643.0 508.5 L641.8 510.7 L640.9 510.2 L640.1 508.5 L639.1 510.0 L638.1 509.0 L636.9 508.2 L635.6 508.3 L634.4 508.7 L633.5 509.5 L632.4 509.0 L631.3 509.5 L630.4 508.5 L629.1 509.8 L627.9 510.5 L626.7 510.5 L625.7 510.1 L624.4 510.6 L623.4 508.8 L621.9 508.6 L620.4 510.6 L619.5 508.6 L618.2 508.7 L617.3 510.4 L616.3 510.3 L615.4 509.1 L614.1 508.0 L613.1 509.9 L611.7 510.8 L610.8 509.4 L609.5 509.4 L608.2 508.5 L607.4 508.2 L606.5 509.6 L605.4 509.6 L604.5 508.5 L603.5 510.4 L602.0 510.7 L601.2 508.1 L599.7 509.3 L598.4 508.9 L597.2 509.4 L596.1 509.7 L595.3 510.0 L593.9 508.4 L592.8 510.1 L591.7 508.5 L590.8 509.4 L590.0 510.6 L588.7 510.0 L587.3 509.8 L586.2 509.7 L585.0 510.8 L583.7 508.7 L582.2 510.1 L580.9 510.3 L579.8 510.6 L578.4 510.0 L577.0 510.2 L575.9 510.1 L575.1 508.9 L574.0 507.9 L572.9 509.8 L571.7 508.6 L570.2 509.9 L569.2 509.9 L568.0 509.5 L566.9 510.9 L565.7 510.0 L564.3 510.8 L563.5 509.7 L562.2 508.7 L561.1 508.1 L560.2 509.0 L559.3 508.7 L557.9 509.6 L556.7 510.8 L555.5 510.9 L554.3 510.3 L553.4 509.7 L552.1 508.0 L550.6 508.4 L549.5 508.4 L548.4 509.7 L547.5 510.7 L546.4 509.5 L545.2 509.0 L544.2 509.9 L543.0 508.8 L541.7 508.8 L540.9 508.6 L540.1 508.4 L538.7 509.1 L537.3 510.1 L536.5 510.9 L535.0 508.1 L533.6 509.2 L532.5 510.8 L531.5 509.5 L530.0 510.1 L528.9 510.8 L527.5 509.7 L526.6 509.8 L525.5 508.5 L524.7 509.5 L523.8 509.2 L522.5 509.3 L521.6 509.6 L520.5 510.2 L519.3 510.9 L517.8 510.1 L516.9 508.2 L515.4 510.3 L514.2 509.0 L513.2 510.0 L512.0 509.7 L510.8 510.2 L509.8 508.6 L508.3 510.6 L506.9 508.0 L506.1 508.7 L505.0 509.8 L504.1 509.5 L503.3 508.2 L502.0 509.6 L500.8 509.0 L499.6 508.5 L498.6 510.1 L497.2 508.1 L496.3 510.3 L495.1 510.2 L494.1 509.2 L493.1 510.3 L492.1 509.9 L490.6 508.9 L489.4 510.1 L488.0 509.2 L486.9 508.2 L485.5 508.1 L484.6 509.6 L483.5 510.0 L482.5 510.2 L481.6 508.5 L480.4 508.1 L479.4 510.1 L478.1 508.7 L477.2 509.0 L475.9 509.0 L475.0 510.0 L473.8 510.7 L472.3 510.6 L471.2 510.3 L470.2 508.9 L469.1 510.7 L467.7 508.6 L466.6 509.0 L465.6 509.1 L464.5 508.5 L463.3 510.3 L462.1 510.4 L461.0 508.4 L459.6 510.5 L458.6 508.0 L457.5 509.5 L456.3 510.8 L455.0 510.3 L454.2 509.5 L452.8 508.2 L452.0 510.1 L450.5 508.2 L449.3 508.3 L448.0 509.8 L447.0 508.6 L445.7 509.5 L444.3 509.1 L443.3 510.8 L442.0 509.4 L440.8 510.1 L439.5 510.6 L438.5 510.4 L437.2 510.5 L435.8 510.4 L434.4 510.8 L433.1 509.5 L431.9 510.3 L430.8 509.2 L429.9 510.1 L428.4 509.0 L427.4 508.5 L426.3 508.8 L424.9 508.1 L423.9 508.2 L422.6 510.2 L421.7 508.1 L420.6 509.7 L419.1 508.0 L418.2 508.5 L417.3 508.6 L416.0 509.7 L415.0 508.5 L414.0 508.4 L412.7 508.8 L411.5 510.4 L410.4 508.7 L409.0 510.6 L407.9 509.5 L406.5 509.3 L405.5 508.0 L404.0 510.3 L403.0 509.5 L401.8 508.7 L400.3 509.9 L399.3 507.9 L398.2 509.0 L396.9 510.0 L395.6 508.4 L394.7 508.9 L393.7 510.5 L392.6 509.8 L391.1 508.7 L389.9 508.4 L388.6 507.9 L387.2 510.4 L385.8 508.1 L384.8 510.0 L384.0 509.3 L382.8 510.8 L381.6 510.5 L380.6 510.3 L379.5 510.7 L378.7 510.4 L377.7 509.5 L376.5 508.4 L375.2 508.8 L374.1 508.1 L373.1 509.3 L371.8 509.0 L370.5 508.2 L369.5 509.3 L368.0 510.4 L366.7 507.9 L365.7 510.0 L364.7 509.6 L363.6 507.9 L362.1 510.3 L361.1 509.7 L360.1 509.0 L359.0 508.8 L357.9 509.1 L356.7 508.7 L355.7 510.1 L354.7 510.7 L353.5 510.1 L352.5 510.4 L351.6 508.3 L350.7 509.9 L349.4 508.4 L348.4 510.4 L347.1 508.2 L346.2 508.4 L345.3 509.1 L344.4 510.7 L343.3 509.4 L342.1 510.2 L340.7 509.1 L339.7 509.1 L338.9 509.1 L337.6 510.8 L336.2 509.9 L335.0 508.0 L334.0 508.9 L332.7 508.2 L331.7 509.4 L330.3 510.4 L329.1 508.4 L327.7 510.6 L326.6 509.0 L325.4 508.3 L324.1 510.9 L322.9 510.0 L321.6 508.5 L320.1 509.8 L319.2 508.1 L318.2 509.6 L317.3 512.5 L315.8 520.0 L313.5 534.0 Z" fill="#e3e31a"/><path d="M317.8 508 V515.7 M319.2 508 V519.9 M321.0 508 V514.0 M324.0 508 V514.2 M325.7 508 V519.5 M327.2 508 V512.3 M332.6 508 V517.3 M333.9 508 V512.3 M339.1 508 V514.9 M341.0 508 V515.3 M342.3 508 V515.6 M343.7 508 V515.6 M346.2 508 V512.9 M347.1 508 V517.2 M348.4 508 V524.6 M349.6 508 V517.0 M352.4 508 V515.4 M354.1 508 V518.7 M355.9 508 V525.3 M358.3 508 V516.5 M360.9 508 V513.1 M361.9 508 V526.2 M365.2 508 V512.4 M368.1 508 V513.1 M371.0 508 V518.2 M377.6 508 V511.9 M378.9 508 V512.4 M380.0 508 V515.1 M384.6 508 V518.2 M386.5 508 V513.9 M387.4 508 V512.8 M390.3 508 V517.7 M393.0 508 V514.9 M394.8 508 V512.3 M403.1 508 V517.4 M404.6 508 V511.7 M406.2 508 V515.4 M407.3 508 V523.0 M408.6 508 V519.0 M411.6 508 V516.6 M412.8 508 V513.9 M414.3 508 V525.6 M417.1 508 V522.3 M420.2 508 V514.9 M422.4 508 V512.8 M425.0 508 V516.3 M426.1 508 V515.7 M432.7 508 V515.3 M434.4 508 V516.7 M435.8 508 V516.0 M441.1 508 V515.1 M445.7 508 V513.2 M447.4 508 V515.0 M448.4 508 V512.6 M449.4 508 V511.6 M451.9 508 V514.5 M453.0 508 V518.6 M455.5 508 V516.7 M456.4 508 V524.0 M459.3 508 V515.6 M462.0 508 V511.9 M463.3 508 V522.1 M464.7 508 V515.8 M466.1 508 V518.3 M467.1 508 V513.4 M469.5 508 V513.1 M470.8 508 V523.0 M472.2 508 V512.6 M474.9 508 V518.3 M476.2 508 V515.8 M479.4 508 V514.3 M482.9 508 V517.5 M486.4 508 V523.4 M487.5 508 V514.4 M490.3 508 V515.5 M493.6 508 V518.1 M496.5 508 V516.2 M497.6 508 V512.1 M498.6 508 V518.5 M499.9 508 V513.7 M508.4 508 V515.1 M509.7 508 V512.5 M514.8 508 V524.7 M516.8 508 V511.6 M525.0 508 V512.0 M527.1 508 V517.4 M529.5 508 V520.5 M531.4 508 V519.3 M532.7 508 V513.3 M534.2 508 V514.3 M539.0 508 V520.4 M539.9 508 V514.9 M548.8 508 V512.5 M550.1 508 V515.1 M555.0 508 V515.7 M556.4 508 V523.0 M557.6 508 V515.8 M559.4 508 V514.9 M561.2 508 V515.8 M562.5 508 V512.3 M569.0 508 V514.1 M577.2 508 V516.0 M578.9 508 V520.0 M584.4 508 V519.0 M586.9 508 V518.2 M588.4 508 V513.7 M592.8 508 V512.0 M595.8 508 V515.9 M597.5 508 V515.6 M601.0 508 V518.3 M603.1 508 V514.6 M604.2 508 V513.6 M608.3 508 V513.1 M609.6 508 V518.2 M611.3 508 V513.6 M613.2 508 V514.7 M614.6 508 V519.4 M617.7 508 V514.2 M618.6 508 V512.8 M624.5 508 V514.0 M626.3 508 V521.9 M629.8 508 V524.1 M637.6 508 V522.7 M639.2 508 V519.9 M644.8 508 V517.3 M648.3 508 V521.8 M649.8 508 V518.9 M651.2 508 V517.8 M653.3 508 V511.7 M660.0 508 V511.5 M661.7 508 V514.7 M663.2 508 V519.9 M665.0 508 V515.3 M666.3 508 V521.1 M671.4 508 V515.6 M672.6 508 V512.7 M673.9 508 V513.1 M675.3 508 V525.7 M676.7 508 V513.3 M677.7 508 V512.9 M678.8 508 V513.7 M681.1 508 V515.8 M684.0 508 V517.5 M685.7 508 V519.7 M688.2 508 V518.4 M690.1 508 V513.0 M691.8 508 V514.4" stroke="#dcdc1c" stroke-width="0.95" fill="none"/><path d="M328.2 508 V520.4 M330.0 508 V512.9 M331.7 508 V514.2 M335.0 508 V513.0 M336.0 508 V512.2 M337.5 508 V513.4 M344.7 508 V515.6 M372.8 508 V519.8 M375.8 508 V512.1 M383.0 508 V516.5 M389.1 508 V521.3 M396.4 508 V514.5 M397.8 508 V515.3 M400.3 508 V512.2 M401.4 508 V515.0 M410.4 508 V513.9 M415.4 508 V518.5 M419.2 508 V514.9 M423.4 508 V527.0 M428.9 508 V522.2 M429.9 508 V514.6 M437.2 508 V517.2 M439.9 508 V511.8 M442.3 508 V515.7 M443.5 508 V512.2 M444.7 508 V514.8 M450.8 508 V512.1 M460.9 508 V515.8 M468.6 508 V514.0 M480.7 508 V519.1 M485.2 508 V516.1 M489.0 508 V515.2 M491.9 508 V514.6 M495.1 508 V512.8 M502.6 508 V517.5 M503.9 508 V512.6 M505.1 508 V514.9 M506.9 508 V513.4 M510.6 508 V515.7 M511.6 508 V513.4 M515.7 508 V518.7 M518.1 508 V512.9 M519.9 508 V517.0 M522.8 508 V514.0 M523.9 508 V515.5 M526.0 508 V512.1 M528.3 508 V519.5 M537.9 508 V515.3 M541.4 508 V520.7 M542.3 508 V515.1 M543.9 508 V515.1 M547.9 508 V512.6 M551.6 508 V512.8 M552.8 508 V521.7 M553.9 508 V514.0 M565.3 508 V516.8 M566.4 508 V513.2 M567.5 508 V515.5 M570.8 508 V513.5 M572.1 508 V512.5 M573.6 508 V511.6 M574.9 508 V514.2 M576.0 508 V516.0 M580.1 508 V514.4 M581.8 508 V513.8 M591.7 508 V515.6 M599.4 508 V518.1 M602.0 508 V512.9 M606.7 508 V512.4 M616.4 508 V513.5 M620.5 508 V518.5 M621.6 508 V512.1 M622.8 508 V513.0 M628.0 508 V513.0 M631.1 508 V512.9 M635.7 508 V514.4 M640.5 508 V517.0 M641.5 508 V518.2 M643.1 508 V519.1 M652.2 508 V512.8 M654.7 508 V513.6 M658.1 508 V514.3 M668.2 508 V513.7 M682.6 508 V512.9 M686.9 508 V513.4" stroke="#b4b41c" stroke-width="0.85" fill="none"/><path d="M320.8 506.0 V509.9 M328.2 503.5 V507.9 M339.6 505.2 V508.0 M343.3 506.8 V511.0 M345.7 504.0 V507.2 M348.8 507.2 V510.2 M351.0 506.9 V509.7 M354.0 503.6 V507.2 M359.2 506.3 V509.7 M362.0 506.5 V509.4 M364.5 504.9 V507.8 M366.6 505.6 V509.1 M371.2 505.4 V510.4 M375.2 506.4 V510.4 M377.1 506.8 V510.2 M379.8 506.0 V509.9 M385.3 504.4 V508.8 M386.9 506.9 V509.5 M389.6 505.7 V509.0 M397.7 505.6 V509.7 M409.8 506.9 V511.2 M411.8 503.6 V507.4 M413.7 504.5 V507.3 M416.0 504.6 V507.8 M433.0 507.2 V510.7 M435.8 505.3 V508.7 M440.9 504.9 V508.0 M444.0 507.3 V511.4 M447.3 504.0 V509.0 M452.6 505.8 V510.7 M458.1 503.8 V507.6 M459.9 504.9 V508.7 M463.9 503.8 V507.5 M468.8 504.7 V508.0 M480.8 505.5 V509.4 M487.7 507.3 V509.9 M492.5 503.6 V508.2 M495.2 505.8 V510.2 M498.0 503.8 V508.3 M503.4 504.9 V507.4 M506.2 505.8 V509.7 M510.6 507.0 V510.0 M512.3 505.4 V509.9 M514.4 506.1 V509.3 M516.8 507.0 V510.0 M518.7 504.8 V509.1 M523.7 506.6 V509.7 M525.6 507.5 V510.9 M530.9 504.0 V508.5 M533.7 506.7 V510.1 M535.7 506.5 V510.2 M538.6 505.5 V508.9 M541.9 507.0 V511.9 M545.0 507.2 V510.1 M549.6 506.2 V510.9 M554.6 504.0 V507.2 M557.7 504.2 V507.6 M559.3 504.2 V507.0 M561.7 505.8 V510.2 M565.7 503.8 V507.1 M570.8 504.8 V508.7 M576.0 505.9 V510.5 M578.3 507.3 V512.2 M582.0 504.2 V507.1 M584.8 503.6 V506.6 M587.6 506.1 V509.8 M589.4 504.7 V507.3 M593.5 506.0 V509.3 M598.1 505.7 V509.3 M606.8 507.4 V510.7 M610.5 504.1 V509.0 M612.5 506.2 V509.6 M614.9 507.2 V511.0 M617.0 505.5 V508.7 M621.8 505.5 V509.2 M626.4 503.8 V508.3 M631.1 507.1 V510.9 M633.4 507.3 V511.0 M635.7 506.9 V510.6 M637.8 504.4 V508.9 M653.2 507.2 V509.7 M655.6 506.7 V510.7 M661.2 506.2 V508.9 M666.4 506.3 V510.7 M678.7 507.3 V511.4 M681.1 504.9 V507.5" stroke="#6a6a18" stroke-width="0.8" fill="none" opacity="0.8"/></svg>
<div class="t" style="top:575.9px;font-size:12.2px;line-height:14.2px;color:#fff;font-weight:bold;letter-spacing:0.01px;left:276.0px;">Ctr: 28 GHz</div>
<div class="t" style="top:575.9px;font-size:12.2px;line-height:14.2px;color:#fff;font-weight:bold;letter-spacing:0.01px;right:901.5px;text-align:right;">Width: 393.2 MHz</div>
<div class="t" style="top:590.9px;font-size:12.2px;line-height:14.2px;color:#fff;font-weight:bold;letter-spacing:0.01px;left:276.0px;">Res BW: 377.1 Hz</div>
<div class="t" style="top:590.9px;font-size:12.2px;line-height:14.2px;color:#fff;font-weight:bold;letter-spacing:0.01px;left:427.5px;">Info BW: 393.22 MHz</div>
<div style="left:274.0px;top:606.2px;width:853.0px;height:40.0px;background:linear-gradient(180deg,#555 0,#555 1.3px,rgba(0,0,0,0) 1.3px,rgba(0,0,0,0.08) 38.4px,#4a4a4a 38.4px),linear-gradient(90deg,#2d2d2d 0,#303030 35%,#393939 85%);"></div>
<div style="left:276.5px;top:610.7px;width:31.6px;height:32.0px;border:1.4px solid #606060;border-radius:4.5px;background:#2c2c2c;"><svg style="left:-1.3px;top:-1.3px" width="31.6" height="32" viewBox="0 0 31.6 32"><path d="M5.6 6.9 L13.9 5.3 V14.9 H5.6 Z M16.1 4.9 L27 3.2 V14.9 H16.1 Z M5.6 16.9 H13.9 V25.4 L5.6 23.8 Z M16.1 16.9 H27 V27.2 L16.1 25.7 Z" fill="#e9e9e9"/></svg></div>
<div style="left:314.4px;top:610.7px;width:31.6px;height:32.0px;border:1.4px solid #606060;border-radius:4.5px;background:#2c2c2c;"><svg style="left:-1.3px;top:-1.3px" width="31.6" height="32" viewBox="0 0 31.6 32"><path d="M9 12.6 C12.6 7.6 18 7 21.2 9.7 C25 13 25.9 18.6 23.5 24.8" stroke="#ececec" stroke-width="4.8" fill="none" stroke-linecap="butt"/><path d="M4.4 6 L4.4 16.8 L13.6 16.8 Z" fill="#ececec"/></svg></div>
<div style="left:352.4px;top:610.7px;width:31.6px;height:32.0px;border:1.4px solid #4c4c4c;border-radius:4.5px;background:transparent;"><svg style="left:-1.3px;top:-1.3px" width="31.6" height="32" viewBox="0 0 31.6 32"><g transform="translate(31.6 0) scale(-1 1)"><path d="M9 12.6 C12.6 7.6 18 7 21.2 9.7 C25 13 25.9 18.6 23.5 24.8" stroke="#a6a6a6" stroke-width="4.8" fill="none" stroke-linecap="butt"/><path d="M4.4 6 L4.4 16.8 L13.6 16.8 Z" fill="#a6a6a6"/></g></svg></div>
<div style="left:390.2px;top:610.7px;width:31.6px;height:32.0px;border:1.4px solid #606060;border-radius:4.5px;background:#2c2c2c;"><svg style="left:-1.3px;top:-1.3px" width="31.6" height="32" viewBox="0 0 31.6 32"><path d="M4.1 9.4 H12.2 L14.6 6 H26 Q27.5 6 27.5 7.5 V25.6 H4.1 Z" fill="#e6e6e6"/></svg></div>
<div style="left:428.3px;top:610.7px;width:31.6px;height:32.0px;border:1.4px solid #606060;border-radius:4.5px;background:#2c2c2c;"><div class="t" style="left:0;top:-1.9px;width:29px;text-align:center;font-size:33px;line-height:33px;font-weight:bold;color:#f2f2f2;letter-spacing:0">?</div></div>
<div class="t" style="top:612.7px;font-size:12.6px;line-height:14.6px;color:#fff;letter-spacing:-0.18px;left:303.2px;width:400px;text-align:center;">May 13, 2020</div>
<div class="t" style="top:626.1px;font-size:12.6px;line-height:14.6px;color:#fff;letter-spacing:-0.18px;left:303.2px;width:400px;text-align:center;">9:36:17 PM</div>
<div style="left:543.3px;top:610.7px;width:425.0px;height:32.0px;border:1.3px solid #505050;border-radius:4px;background:linear-gradient(180deg,#2c2c2c,#242424);"></div>
<svg style="left:543px;top:610px" width="64" height="34" viewBox="0 0 64 34">
<path d="M17 6 C24.4 6 29 10 29 15.4 C29 20.8 24.4 24.6 17 24.6 C15.4 24.6 13.9 24.4 12.5 24 C10.8 25.8 8.9 26.8 6.2 27.2 C7.6 25.8 8.2 24.2 8.3 22.2 C6.2 20.5 5 18.1 5 15.4 C5 10 9.6 6 17 6 Z" fill="#484848" stroke="#909090" stroke-width="1.3"/>
<circle cx="12.6" cy="15.4" r="1.15" fill="#e8e8e8"/><circle cx="17" cy="15.4" r="1.15" fill="#e8e8e8"/><circle cx="21.4" cy="15.4" r="1.15" fill="#e8e8e8"/>
<path d="M44 4.6 L55.4 27.4 H32.6 Z" fill="none" stroke="#3d3d3d" stroke-width="1.2"/></svg>
<div style="left:974.3px;top:610.7px;width:31.6px;height:32.0px;border:1.4px solid #828282;border-radius:4.5px;background:#2c2c2c;"><svg style="left:-1.3px;top:-1.3px" width="31.6" height="32" viewBox="0 0 31.6 32"><g fill="#f0f0f0"><rect x="13" y="6.5" width="6" height="5.7" rx="0.9"/><rect x="22.7" y="6.5" width="6" height="5.7" rx="0.9"/><rect x="3.5" y="18.5" width="6" height="5.7" rx="0.9"/><rect x="13" y="18.5" width="6" height="5.7" rx="0.9"/><rect x="22.7" y="18.5" width="6" height="5.7" rx="0.9"/></g><path d="M16 9.4 H25.5 M16 9.4 V21.3 M6.5 21.4 H25.5" stroke="#e4e4e4" stroke-width="1.1" fill="none"/></svg></div>
<div style="left:1012.4px;top:610.7px;width:31.6px;height:32.0px;border:1.4px solid #828282;border-radius:4.5px;background:#2c2c2c;"><svg style="left:-1.3px;top:-1.3px" width="31.6" height="32" viewBox="0 0 31.6 32"><g fill="none" stroke="#b4b4b4" stroke-width="1.4"><rect x="3.3" y="4" width="11" height="9.6" rx="1.6"/><rect x="17.4" y="4" width="11" height="9.6" rx="1.6"/><rect x="3.3" y="17.2" width="11" height="10.6" rx="1.6"/><rect x="17.4" y="17.2" width="11" height="10.6" rx="1.6"/></g><path d="M7.3 6.4 C6.6 5 7.6 3.9 9 4.2 C9.9 4.4 10.4 4.9 11 5.6 L15.2 10.4 C16 9.4 17.3 9.5 18 10.4 C19 9.9 20 10.4 20.5 11.4 C21.6 11.2 22.3 12 22.6 13 L23.6 17.6 C23.9 19 23.6 20 22.6 20.8 L16.4 25 L12.6 19.6 C11.6 18.2 10.6 16.8 10.9 15 L11.2 14 Z" fill="#f0f0f0" stroke="#2b2b2b" stroke-width="0.6"/><path d="M15.4 23.4 L21.9 18.6 L24.6 21.8 L18.2 26.8 Z" fill="#f0f0f0" stroke="#2b2b2b" stroke-width="0.7"/></svg></div>
<div style="left:1050.3px;top:610.7px;width:31.6px;height:32.0px;border:1.4px solid #4c4c4c;border-radius:4.5px;background:transparent;"><svg style="left:-1.3px;top:-1.3px" width="31.6" height="32" viewBox="0 0 31.6 32"><g fill="#323232" stroke="#585858" stroke-width="1.5"><rect x="3.6" y="3.6" width="11.2" height="10.8" rx="1.8"/><rect x="16.6" y="3.6" width="11.2" height="10.8" rx="1.8"/><rect x="3.6" y="17" width="11.2" height="10.8" rx="1.8"/><rect x="16.6" y="17" width="11.2" height="10.8" rx="1.8"/></g></svg></div>
<div style="left:1088.3px;top:610.7px;width:31.6px;height:32.0px;border:1.4px solid #828282;border-radius:4.5px;background:#2c2c2c;"><svg style="left:-1.3px;top:-1.3px" width="31.6" height="32" viewBox="0 0 31.6 32"><path d="M13.95 13.48 L8.41 8.03" stroke="#f2f2f2" stroke-width="1.5" fill="none"/><path d="M3.70 3.40 L11.57 6.23 L8.26 7.89 L6.66 11.22 Z" fill="#f2f2f2"/><path d="M17.68 13.51 L23.52 7.95" stroke="#f2f2f2" stroke-width="1.5" fill="none"/><path d="M28.30 3.40 L25.21 11.18 L23.66 7.81 L20.38 6.11 Z" fill="#f2f2f2"/><path d="M13.96 17.14 L8.37 22.73" stroke="#f2f2f2" stroke-width="1.5" fill="none"/><path d="M3.70 27.40 L6.60 19.55 L8.23 22.87 L11.55 24.50 Z" fill="#f2f2f2"/><path d="M17.67 17.11 L23.56 22.81" stroke="#f2f2f2" stroke-width="1.5" fill="none"/><path d="M28.30 27.40 L20.41 24.63 L23.70 22.95 L25.27 19.60 Z" fill="#f2f2f2"/></svg></div>
<div style="left:699.0px;top:375.8px;width:427.6px;height:232.0px;background:linear-gradient(90deg,#252525,#2e2e2e);border:2.4px solid #25b4e6;"></div>
<div class="dd" style="left:702.0px;top:378.5px;width:135.0px;height:25.5px;"></div>
<div class="t" style="top:385.1px;font-size:11.5px;line-height:13.5px;color:#fff;letter-spacing:-0.3px;left:704.4px;">4 CC0 Error Summary</div>
<svg style="left:828.5px;top:388px" width="8" height="8" viewBox="0 0 8 8"><path d="M0.6 0.8 L6.4 0.8 L3.5 7.4 Z" fill="#f4f4f4"/></svg>
<div style="left:705.5px;top:410.6px;width:134.7px;height:194.7px;background:#474747;"></div>
<div style="left:840.2px;top:410.6px;width:89.0px;height:194.7px;background:#212121;"></div>
<div style="left:705.5px;top:410.6px;width:223.7px;height:1.0px;background:#545454;"></div>
<div class="t" style="top:411.5px;font-size:12.8px;line-height:14.8px;color:#fff;letter-spacing:-0.32px;left:708.0px;">Channel Power</div>
<div class="t" style="top:411.5px;font-size:12.8px;line-height:14.8px;color:#fff;letter-spacing:-0.32px;right:674.5px;text-align:right;">-14.43 dBm</div>
<div style="left:705.5px;top:425.7px;width:223.7px;height:1.0px;background:#545454;"></div>
<div class="t" style="top:426.6px;font-size:12.8px;line-height:14.8px;color:#fff;letter-spacing:-0.32px;left:708.0px;">Channel Power (Active)</div>
<div class="t" style="top:426.6px;font-size:12.8px;line-height:14.8px;color:#fff;letter-spacing:-0.32px;right:674.5px;text-align:right;">-13.14 dBm</div>
<div style="left:705.5px;top:440.8px;width:223.7px;height:1.0px;background:#545454;"></div>
<div class="t" style="top:441.7px;font-size:12.8px;line-height:14.8px;color:#fff;letter-spacing:-0.32px;left:708.0px;">EVM</div>
<div class="t" style="top:441.7px;font-size:12.8px;line-height:14.8px;color:#fff;letter-spacing:-0.32px;right:674.5px;text-align:right;">1.06 %</div>
<div style="left:705.5px;top:456.0px;width:223.7px;height:1.0px;background:#545454;"></div>
<div class="t" style="top:456.8px;font-size:12.8px;line-height:14.8px;color:#fff;letter-spacing:-0.32px;left:708.0px;">EVM Peak</div>
<div class="t" style="top:456.8px;font-size:12.8px;line-height:14.8px;color:#fff;letter-spacing:-0.32px;right:674.5px;text-align:right;">5.02 %</div>
<div style="left:705.5px;top:471.1px;width:223.7px;height:1.0px;background:#545454;"></div>
<div class="t" style="top:471.9px;font-size:12.8px;line-height:14.8px;color:#fff;letter-spacing:-0.32px;left:708.0px;">Frequency Error</div>
<div class="t" style="top:471.9px;font-size:12.8px;line-height:14.8px;color:#fff;letter-spacing:-0.32px;right:674.5px;text-align:right;">-203.15 Hz</div>
<div style="left:705.5px;top:486.2px;width:223.7px;height:1.0px;background:#545454;"></div>
<div class="t" style="top:487.1px;font-size:12.8px;line-height:14.8px;color:#fff;letter-spacing:-0.32px;left:708.0px;">Symbol Clock Error</div>
<div class="t" style="top:487.1px;font-size:12.8px;line-height:14.8px;color:#fff;letter-spacing:-0.32px;right:674.5px;text-align:right;">-0.003 ppm</div>
<div style="left:705.5px;top:501.3px;width:223.7px;height:1.0px;background:#545454;"></div>
<div class="t" style="top:502.2px;font-size:12.8px;line-height:14.8px;color:#fff;letter-spacing:-0.32px;left:708.0px;">IQ Offset</div>
<div class="t" style="top:502.2px;font-size:12.8px;line-height:14.8px;color:#fff;letter-spacing:-0.32px;right:674.5px;text-align:right;">-67.69 dB</div>
<div style="left:705.5px;top:516.4px;width:223.7px;height:1.0px;background:#545454;"></div>
<div class="t" style="top:517.3px;font-size:12.8px;line-height:14.8px;color:#fff;letter-spacing:-0.32px;left:708.0px;">Time Offset</div>
<div class="t" style="top:517.3px;font-size:12.8px;line-height:14.8px;color:#fff;letter-spacing:-0.32px;right:674.5px;text-align:right;">4.015 ms</div>
<div style="left:705.5px;top:531.6px;width:223.7px;height:1.0px;background:#545454;"></div>
<div class="t" style="top:532.4px;font-size:12.8px;line-height:14.8px;color:#fff;letter-spacing:-0.32px;left:708.0px;">Sync Correlation</div>
<div class="t" style="top:532.4px;font-size:12.8px;line-height:14.8px;color:#fff;letter-spacing:-0.32px;right:674.5px;text-align:right;">99.6 %</div>
<div style="left:705.5px;top:546.7px;width:223.7px;height:1.0px;background:#545454;"></div>
<div class="t" style="top:547.5px;font-size:12.8px;line-height:14.8px;color:#fff;letter-spacing:-0.32px;left:708.0px;">Sync Source</div>
<div class="t" style="top:547.5px;font-size:12.8px;line-height:14.8px;color:#fff;letter-spacing:-0.32px;right:674.5px;text-align:right;">PDSCH DMRS</div>
<div style="left:705.5px;top:561.8px;width:223.7px;height:1.0px;background:#545454;"></div>
<div class="t" style="top:562.7px;font-size:12.8px;line-height:14.8px;color:#fff;letter-spacing:-0.32px;left:708.0px;">Magnitude Error</div>
<div class="t" style="top:562.7px;font-size:12.8px;line-height:14.8px;color:#fff;letter-spacing:-0.32px;right:674.5px;text-align:right;">0.75 %</div>
<div style="left:705.5px;top:576.9px;width:223.7px;height:1.0px;background:#545454;"></div>
<div class="t" style="top:577.8px;font-size:12.8px;line-height:14.8px;color:#fff;letter-spacing:-0.32px;left:708.0px;">Phase Error</div>
<div class="t" style="top:577.8px;font-size:12.8px;line-height:14.8px;color:#fff;letter-spacing:-0.32px;right:674.5px;text-align:right;">0.01 rad</div>
<div style="left:705.5px;top:592.0px;width:223.7px;height:1.0px;background:#545454;"></div>
<div class="t" style="top:592.9px;font-size:12.8px;line-height:14.8px;color:#fff;letter-spacing:-0.32px;left:708.0px;clip-path:inset(0 0 2.5px 0);">Gain Imbalance</div>
<div class="t" style="top:592.9px;font-size:12.8px;line-height:14.8px;color:#fff;letter-spacing:-0.32px;right:674.5px;text-align:right;clip-path:inset(0 0 2.5px 0);">---</div>
<div style="left:705.5px;top:410.6px;width:1.0px;height:194.7px;background:#5a5a5a;"></div>
<div style="left:839.7px;top:410.6px;width:1.0px;height:194.7px;background:#3a3a3a;"></div>
<div style="left:928.7px;top:410.6px;width:1.0px;height:194.7px;background:#4a4a4a;"></div>
<div style="left:1116.8px;top:406.5px;width:7.4px;height:170.5px;background:#9b9b9b;"></div>
<div style="left:1129.8px;top:53.0px;width:31.7px;height:32.2px;background:#474747;border:1.5px solid #828282;border-radius:4px;"></div>
<svg style="left:0;top:0" width="1600" height="900" viewBox="0 0 1600 900"><path d="M1143.61 61.41 L1143.59 58.35 L1147.21 58.35 L1147.19 61.41 L1149.43 62.34 L1151.58 60.16 L1154.14 62.72 L1151.96 64.87 L1152.89 67.11 L1155.95 67.09 L1155.95 70.71 L1152.89 70.69 L1151.96 72.93 L1154.14 75.08 L1151.58 77.64 L1149.43 75.46 L1147.19 76.39 L1147.21 79.45 L1143.59 79.45 L1143.61 76.39 L1141.37 75.46 L1139.22 77.64 L1136.66 75.08 L1138.84 72.93 L1137.91 70.69 L1134.85 70.71 L1134.85 67.09 L1137.91 67.11 L1138.84 64.87 L1136.66 62.72 L1139.22 60.16 L1141.37 62.34 Z" fill="#fff" stroke="#fff" stroke-width="1.5" stroke-linejoin="round"/><circle cx="1145.4" cy="68.9" r="4.5" fill="#4c4c4c" stroke="#444" stroke-width="0.6"/></svg>
<div style="left:1126.9px;top:87.5px;width:207.1px;height:558.5px;background:#33748f;"></div>
<div style="left:1268.0px;top:98.0px;width:46.0px;height:532.0px;background:#2c6a84;box-shadow:0 0 5px 5px #2c6a84;"></div>
<div style="left:1295.0px;top:50.0px;width:39.0px;height:38.0px;background:#3a3a3a;"></div>
<div style="left:1164.6px;top:50.6px;width:130.6px;height:40.0px;background:linear-gradient(180deg,#37788f,#30718c 70%,#33748f);border-radius:6px 6px 0 0;border-top:1px solid #4f8ca6;"></div>
<div class="t" style="top:62.4px;font-size:12px;line-height:14px;color:#fff;letter-spacing:0.06px;left:1196.6px;">Input/Output</div>
<svg style="left:1282px;top:66px" width="8" height="8" viewBox="0 0 8 8"><path d="M0.6 0.8 L6.4 0.8 L3.5 7.4 Z" fill="#f4f4f4"/></svg>
<div style="left:1297.8px;top:53.0px;width:32.5px;height:32.5px;background:#4b4b4b;border:1.5px solid #8c8c8c;border-radius:5px;"></div>
<svg style="left:0;top:0" width="1600" height="900" viewBox="0 0 1600 900"><path d="M1318.60 68.80 L1325.40 68.80 M1317.25 72.05 L1322.06 76.86 M1314.00 73.40 L1314.00 80.20 M1310.75 72.05 L1305.94 76.86 M1309.40 68.80 L1302.60 68.80 M1310.75 65.55 L1305.94 60.74 M1314.00 64.20 L1314.00 57.40 M1317.25 65.55 L1322.06 60.74" stroke="#3cf03c" stroke-width="2.4" stroke-linecap="butt" fill="none"/></svg>
<div style="left:1129.4px;top:90.6px;width:131.9px;height:552.0px;background:linear-gradient(180deg,#22baee 0,#27b8ea 250px,#2fb6e6 420px);border-left:1.5px solid #55ccf5;border-top:1.5px solid #55ccf5;border-bottom:1px solid #4cc6ee;border-right:1.6px solid #50d0fa;border-radius:6px 0 0 0;"></div>
<div class="mbox" style="left:1133.2px;top:94.0px;width:124.4px;height:40.3px;"></div>
<div class="t" style="top:95.9px;font-size:12.6px;line-height:14.6px;color:#fff;letter-spacing:-0.22px;left:1134.5px;">Select Correction</div>
<div style="left:1135.0px;top:112.0px;width:120.5px;height:19.5px;background:#5d5d5d;border-top:1px solid #646464;border-bottom:1px solid #7a7a7a;"></div>
<div class="t" style="top:113.9px;font-size:12.6px;line-height:14.6px;color:#fff;letter-spacing:-0.22px;left:1137.0px;">Correction 1</div>
<svg style="left:1247px;top:117.5px" width="8" height="8" viewBox="0 0 8 8"><path d="M0.6 0.8 L6.4 0.8 L3.5 7.4 Z" fill="#f4f4f4"/></svg>
<div class="mbox" style="left:1133.2px;top:139.0px;width:124.4px;height:49.3px;"></div>
<div class="t" style="top:140.7px;font-size:12.6px;line-height:14.6px;color:#fff;letter-spacing:-0.22px;left:1134.5px;">Correction</div>
<div style="left:1136.0px;top:156.2px;width:20.0px;height:13.4px;background:linear-gradient(180deg,#34b4e2 0,#34b4e2 5px,#2a86ac 5px,#2a86ac 6.2px,#34b4e2 6.2px,#34b4e2 8.4px,#2b94be 8.4px);"></div>
<div style="left:1139.0px;top:170.4px;width:13.6px;height:12.6px;background:#4d4d4d;border:1px solid #5a5a5a;"></div>
<div class="t" style="top:155.8px;font-size:12.5px;line-height:14.5px;color:#fff;letter-spacing:-0.3px;left:1161.0px;">On</div>
<div class="t" style="top:169.2px;font-size:12.5px;line-height:14.5px;color:#fff;letter-spacing:-0.3px;left:1161.0px;">Off</div>
<div class="mbox" style="left:1133.2px;top:192.5px;width:124.4px;height:40.3px;"></div>
<div class="t" style="top:194.0px;font-size:12.6px;line-height:14.6px;color:#fff;letter-spacing:-0.22px;left:1134.5px;">Correction Port</div>
<div style="left:1135.0px;top:210.0px;width:120.5px;height:19.5px;background:#5d5d5d;border-top:1px solid #646464;border-bottom:1px solid #7a7a7a;"></div>
<div class="t" style="top:212.2px;font-size:12.6px;line-height:14.6px;color:#fff;letter-spacing:-0.22px;left:1137.0px;">Current Input</div>
<svg style="left:1247px;top:215.5px" width="8" height="8" viewBox="0 0 8 8"><path d="M0.6 0.8 L6.4 0.8 L3.5 7.4 Z" fill="#f4f4f4"/></svg>
<div class="mbtn" style="left:1137.5px;top:237.5px;width:116.0px;height:29.4px;"></div>
<svg style="left:1137.8px;top:242px" width="12" height="20" viewBox="0 0 12 20"><path d="M9.2 1.5 L2.2 10 L9.2 18.5" stroke="#fff" stroke-width="1.7" fill="none"/></svg>
<div class="t" style="top:245.1px;font-size:12.6px;line-height:14.6px;color:#fff;letter-spacing:-0.22px;left:995.5px;width:400px;text-align:center;">Edit Correction</div>
<div style="left:1129.0px;top:270.2px;width:132.5px;height:1.6px;background:#5d6a70;"></div>
<div class="mbtn" style="left:1137.5px;top:278.0px;width:116.0px;height:29.6px;"></div>
<svg style="left:1137.8px;top:283px" width="12" height="20" viewBox="0 0 12 20"><path d="M9.2 1.5 L2.2 10 L9.2 18.5" stroke="#fff" stroke-width="1.7" fill="none"/></svg>
<div class="t" style="top:278.5px;font-size:12.6px;line-height:14.6px;color:#fff;letter-spacing:-0.22px;left:995.5px;width:400px;text-align:center;">Complex</div>
<div class="t" style="top:292.7px;font-size:12.6px;line-height:14.6px;color:#fff;letter-spacing:-0.22px;left:995.5px;width:400px;text-align:center;">Corrections</div>
<div style="left:1129.0px;top:311.2px;width:132.5px;height:1.6px;background:#5d6a70;"></div>
<div class="t" style="top:320.9px;font-size:12.6px;line-height:14.6px;color:#1a5c7a;letter-spacing:-0.22px;left:1133.0px;">All Corrections</div>
<div class="mbox" style="left:1133.2px;top:339.7px;width:124.4px;height:61.7px;"></div>
<div class="t" style="top:340.7px;font-size:12.6px;line-height:14.6px;color:#fff;letter-spacing:-0.22px;left:1134.5px;">Apply</div>
<div class="t" style="top:354.3px;font-size:12.6px;line-height:14.6px;color:#fff;letter-spacing:-0.22px;left:1134.5px;">Corrections</div>
<div style="left:1136.0px;top:370.0px;width:20.0px;height:13.4px;background:linear-gradient(180deg,#34b4e2 0,#34b4e2 5px,#2a86ac 5px,#2a86ac 6.2px,#34b4e2 6.2px,#34b4e2 8.4px,#2b94be 8.4px);"></div>
<div style="left:1139.0px;top:384.2px;width:13.6px;height:12.6px;background:#4d4d4d;border:1px solid #5a5a5a;"></div>
<div class="t" style="top:369.6px;font-size:12.5px;line-height:14.5px;color:#fff;letter-spacing:-0.3px;left:1161.0px;">On</div>
<div class="t" style="top:383.0px;font-size:12.5px;line-height:14.5px;color:#fff;letter-spacing:-0.3px;left:1161.0px;">Off</div>
<div class="mbtn" style="left:1137.5px;top:406.6px;width:116.0px;height:28.8px;"></div>
<div class="t" style="top:406.7px;font-size:12.6px;line-height:14.6px;color:#fff;letter-spacing:-0.22px;left:995.5px;width:400px;text-align:center;">Delete All</div>
<div class="t" style="top:421.1px;font-size:12.6px;line-height:14.6px;color:#fff;letter-spacing:-0.22px;left:995.5px;width:400px;text-align:center;">Corrections</div>
<div style="left:1129.0px;top:438.4px;width:132.5px;height:1.6px;background:#5d6a70;"></div>
<div class="rtab" style="left:1261.4px;top:94.0px;width:68.6px;height:29.4px;"></div>
<div class="t" style="top:101.7px;font-size:12.6px;line-height:14.6px;color:#fff;letter-spacing:-0.22px;left:1264.6px;">Input</div>
<div class="rtab" style="left:1261.4px;top:132.0px;width:68.6px;height:29.4px;"></div>
<div class="t" style="top:132.7px;font-size:12.6px;line-height:14.6px;color:#fff;letter-spacing:-0.22px;left:1264.6px;">External</div>
<div class="t" style="top:146.5px;font-size:12.6px;line-height:14.6px;color:#fff;letter-spacing:-0.22px;left:1264.6px;">Gain</div>
<div style="left:1259.0px;top:168.8px;width:71.5px;height:31.8px;background:#23baee;border-radius:0 5px 5px 0;box-shadow:0 1.5px 1px #2a6a85;"></div>
<div class="t" style="top:177.1px;font-size:12.6px;line-height:14.6px;color:#1f607c;letter-spacing:-0.22px;left:1265.0px;">Corrections</div>
<div class="rtab" style="left:1261.4px;top:207.6px;width:68.6px;height:29.4px;"></div>
<div class="t" style="top:208.3px;font-size:12.6px;line-height:14.6px;color:#fff;letter-spacing:-0.22px;left:1264.6px;">Data</div>
<div class="t" style="top:222.1px;font-size:12.6px;line-height:14.6px;color:#fff;letter-spacing:-0.22px;left:1264.6px;">Source</div>
<div class="rtab" style="left:1261.4px;top:245.8px;width:68.6px;height:29.4px;"></div>
<div class="t" style="top:246.5px;font-size:12.6px;line-height:14.6px;color:#fff;letter-spacing:-0.22px;left:1264.6px;">Freq Ref</div>
<div class="t" style="top:260.3px;font-size:12.6px;line-height:14.6px;color:#fff;letter-spacing:-0.22px;left:1264.6px;">Input</div>
<div class="rtab" style="left:1261.4px;top:283.6px;width:68.6px;height:29.4px;"></div>
<div class="t" style="top:291.3px;font-size:12.6px;line-height:14.6px;color:#fff;letter-spacing:-0.22px;left:1264.6px;">Output</div>
<div class="rtab" style="left:1261.4px;top:321.6px;width:68.6px;height:29.4px;"></div>
<div class="t" style="top:322.3px;font-size:12.6px;line-height:14.6px;color:#fff;letter-spacing:-0.22px;left:1264.6px;">Trigger</div>
<div class="t" style="top:336.1px;font-size:12.6px;line-height:14.6px;color:#fff;letter-spacing:-0.22px;left:1264.6px;">Output</div>
<div style="left:0.0px;top:0.0px;width:1600.0px;height:900.0px;clip-path:polygon(1148.6px 0px, 1600px 0px, 1600px 900px, 781.4px 900px);background:linear-gradient(180deg,rgba(255,255,255,0.20) 50px,rgba(255,255,255,0.18) 115px,rgba(255,255,255,0.125) 180px,rgba(255,255,255,0.09) 300px,rgba(255,255,255,0.055) 400px,rgba(255,255,255,0.04) 500px,rgba(255,255,255,0.03) 646px);"></div>
</div>
<div style="position:absolute;left:232px;top:7px;width:1137px;height:696px;border-radius:26px;overflow:hidden;
clip-path:polygon(0 0,100% 0,100% 100%,0 100%,0 43px,42px 43px,42px 639px,1102px 639px,1102px 43px,0 43px);">
<div style="position:absolute;left:-232px;top:-7px;width:1600px;height:900px;clip-path:polygon(1148.6px 0px, 1600px 0px, 1600px 900px, 781.4px 900px);
background:linear-gradient(180deg,rgba(255,255,255,0.37) 7px,rgba(255,255,255,0.34) 50px,rgba(255,255,255,0.20) 200px,rgba(255,255,255,0.10) 330px,rgba(255,255,255,0.04) 420px,rgba(255,255,255,0.015) 520px,rgba(255,255,255,0.012) 703px);"></div>
</div>
</body></html>
